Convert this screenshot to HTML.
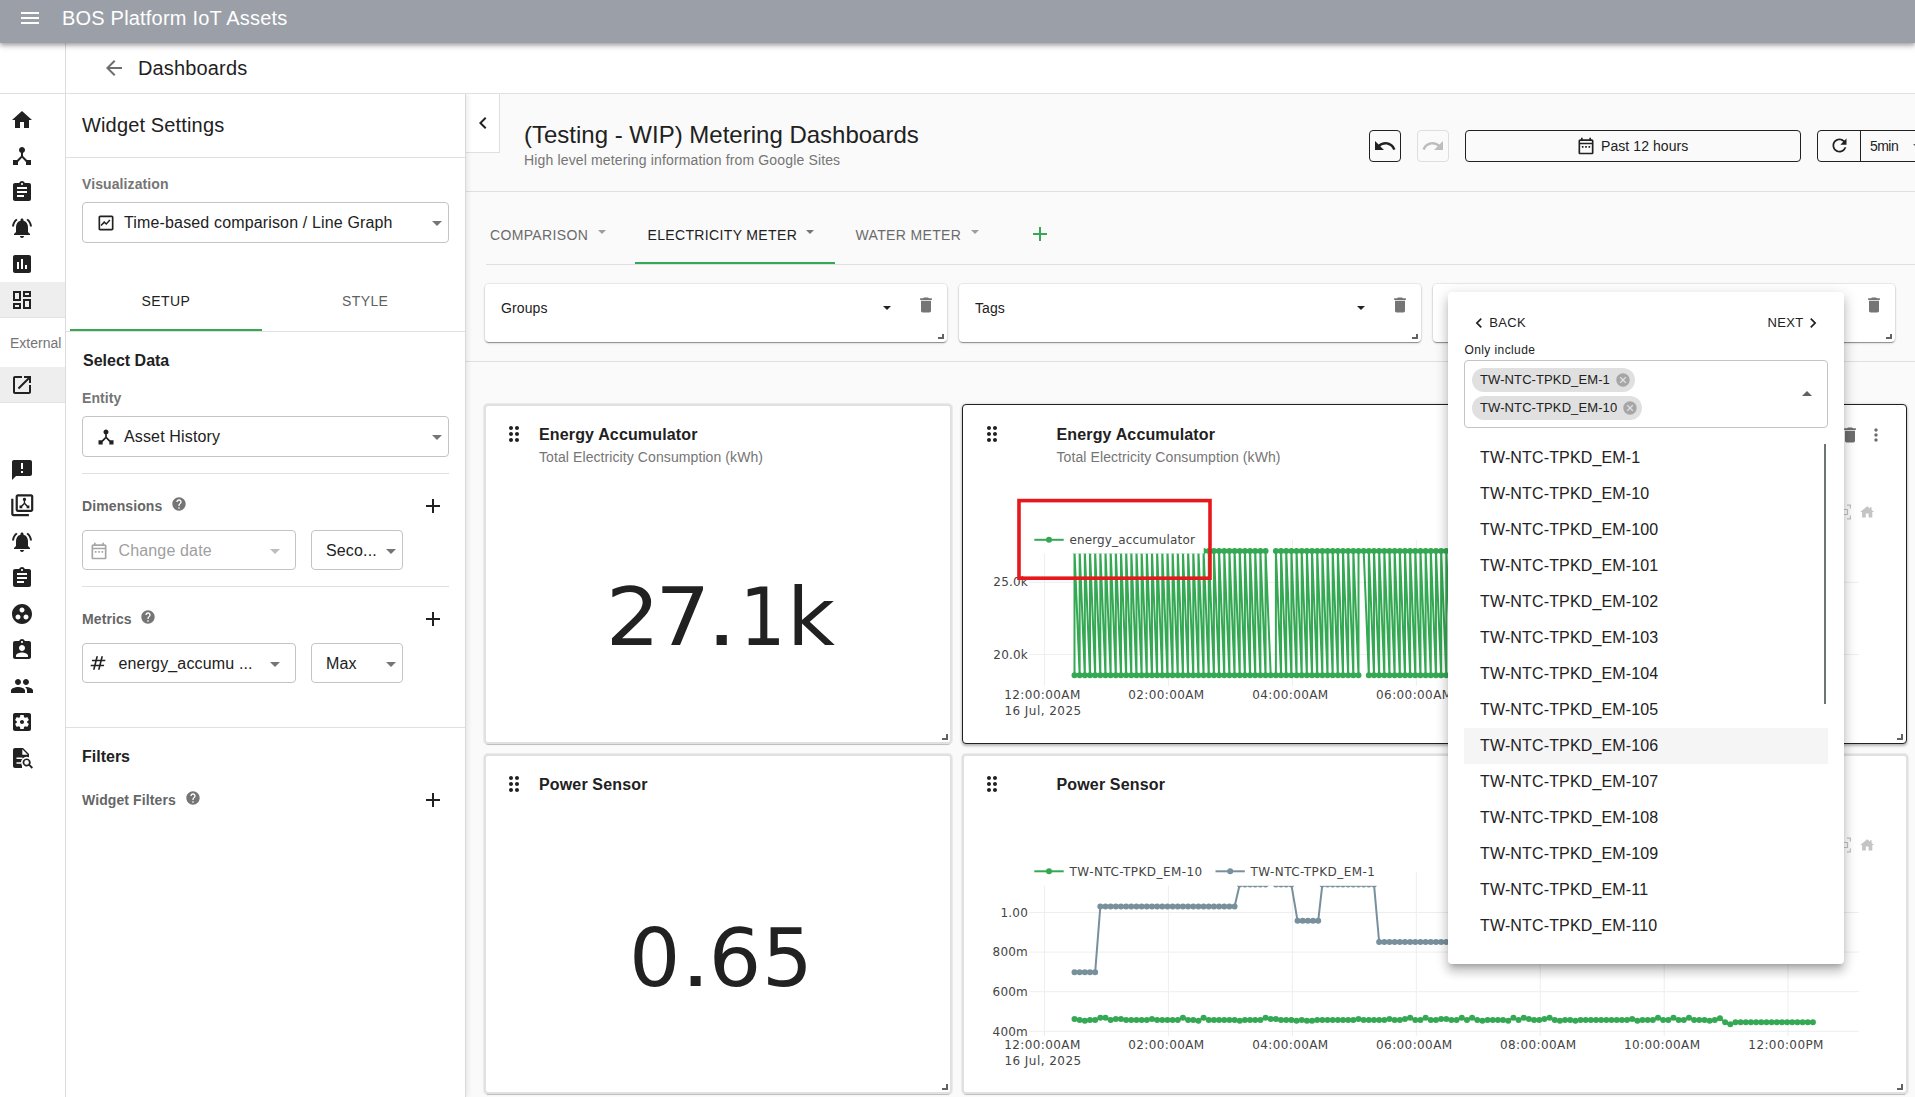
<!DOCTYPE html>
<html lang="en">
<head>
<meta charset="utf-8">
<title>BOS Platform IoT Assets</title>
<style>
*{box-sizing:border-box;margin:0;padding:0}
html,body{width:1915px;height:1097px;overflow:hidden;background:#fff;font-family:"Liberation Sans",sans-serif;color:#212121}
.abs{position:absolute}
svg{display:block}
.ico{position:absolute;width:24px;height:24px;fill:#212121}
/* top bar */
#topbar{left:0;top:0;width:1915px;height:43px;background:#9ba0a8;box-shadow:0 2px 4px rgba(0,0,0,.28),0 4px 6px rgba(0,0,0,.12);z-index:20}
#topbar .title{left:62px;top:6px;font-size:20px;letter-spacing:.2px;line-height:24px;color:#fff;white-space:nowrap}
/* subheader */
#subbar{left:66px;top:43px;width:1849px;height:51px;background:#fff;border-bottom:1px solid #e0e0e0;z-index:5}
#subbar .t{left:72px;top:13px;font-size:20px;letter-spacing:.15px;line-height:24px;color:#1f1f1f;white-space:nowrap}
/* sidebar */
#side{left:0;top:43px;width:66px;height:1054px;background:#fff;border-right:1px solid #dcdcdc;z-index:6}
#side .sel{left:0;width:65px;height:36px;background:#eeeeee}
#side .ext{left:10px;top:292px;font-size:14px;line-height:16px;color:#757575;white-space:nowrap}
/* settings panel */
#panel{left:66px;top:94px;width:400px;height:1003px;background:#fff;border-right:1px solid #d9d9d9;box-shadow:2px 0 5px rgba(0,0,0,.08);z-index:4}
.hl{position:absolute;height:1px;background:#e0e0e0}
.lbl{position:absolute;font-size:14px;letter-spacing:.1px;font-weight:bold;color:#757575;line-height:16px;white-space:nowrap}
.sec{position:absolute;font-size:16px;font-weight:bold;color:#212121;line-height:20px;white-space:nowrap}
.box{position:absolute;border:1px solid #c4c4c4;border-radius:4px;background:#fff;height:41px}
.box .tx{position:absolute;font-size:16px;line-height:20px;top:10px;color:#212121;white-space:nowrap}
.dd{position:absolute;width:0;height:0;border-left:5px solid transparent;border-right:5px solid transparent;border-top:5px solid #757575}
/* main */
#main{left:466px;top:94px;width:1449px;height:1003px;background:#fafafa;z-index:1}
.card{position:absolute;background:#fff;border-radius:4px;box-shadow:0 0 0 1px rgba(0,0,0,.05),0 2px 1px -1px rgba(0,0,0,.22),0 1px 1px 0 rgba(0,0,0,.16),0 1px 3px 0 rgba(0,0,0,.14)}
.ctitle{position:absolute;font-size:16px;font-weight:bold;line-height:24px;color:#212121;white-space:nowrap}
.csub{position:absolute;font-size:14px;line-height:16px;color:#757575;white-space:nowrap}
.big{position:absolute;font-family:"DejaVu Sans",sans-serif;color:#212121;white-space:nowrap;text-align:center}
.tab{position:absolute;font-size:14px;letter-spacing:.35px;line-height:16px;white-space:nowrap;color:#6b6b6b}
.btn{position:absolute;border:1px solid #212121;border-radius:4px;height:33px;background:#fafafa}
.rz{position:absolute;width:5.600px;height:5.600px;border-right:2px solid #626262;border-bottom:2px solid #626262}
/* popup */
#pop{left:1448px;top:292px;width:396px;height:672px;background:#fff;border-radius:4px;box-shadow:0 5px 5px -3px rgba(0,0,0,.2),0 8px 10px 1px rgba(0,0,0,.14),0 3px 14px 2px rgba(0,0,0,.12);z-index:30}
.opt{position:absolute;left:16px;width:364px;height:36px;font-size:16px;line-height:36px;padding-left:16px;color:#212121;white-space:nowrap}
.chip{position:absolute;height:24px;border-radius:12px;background:#e0e0e0;font-size:13px;letter-spacing:.1px;line-height:24px;padding-left:8px;color:#212121;white-space:nowrap}
</style>
</head>
<body>
<!-- TOPBAR -->
<div id="topbar" class="abs">
  <svg class="ico" style="left:18px;top:6px;fill:#fff" viewBox="0 0 24 24"><path d="M3 18h18v-2H3v2zm0-5h18v-2H3v2zm0-7v2h18V6H3z"/></svg>
  <div class="abs title">BOS Platform IoT Assets</div>
</div>
<!-- SUBBAR -->
<div id="subbar" class="abs">
  <svg class="ico" style="left:36px;top:13px;fill:#6e6e6e" viewBox="0 0 24 24"><path d="M20 11H7.83l5.59-5.59L12 4l-8 8 8 8 1.41-1.41L7.83 13H20v-2z"/></svg>
  <div class="abs t">Dashboards</div>
</div>
<!-- SIDEBAR -->
<div id="side" class="abs">
<!--SIDE-->
<div class="abs sel" style="top:239px;border-bottom:1px solid #e2e2e2"></div>
<div class="abs sel" style="top:324px;border-bottom:1px solid #e2e2e2"></div>
<div class="abs ext">External</div>
<div class="abs sideline" style="left:0;top:50px;width:65px;height:1px;background:#e0e0e0"></div>
<svg class="ico" style="left:10.00px;top:65.00px;width:24.0px;height:24.0px" viewBox="0 0 24 24"><path d="M10 20v-6h4v6h5v-8h3L12 3 2 12h3v8z"/></svg>
<svg class="ico" style="left:10.00px;top:101.00px;width:24.0px;height:24.0px" viewBox="0 0 24 24"><path d="M17 16l-4-4V8.82C14.16 8.4 15 7.3 15 6c0-1.66-1.34-3-3-3S9 4.34 9 6c0 1.3.84 2.4 2 2.82V12l-4 4H3v5h5v-3.05l4-4.2 4 4.2V21h5v-5h-4z"/></svg>
<svg class="ico" style="left:10.00px;top:137.00px;width:24.0px;height:24.0px" viewBox="0 0 24 24"><path d="M19 3h-4.18C14.4 1.84 13.3 1 12 1c-1.3 0-2.4.84-2.82 2H5c-1.1 0-2 .9-2 2v14c0 1.1.9 2 2 2h14c1.1 0 2-.9 2-2V5c0-1.1-.9-2-2-2zm-7 0c.55 0 1 .45 1 1s-.45 1-1 1-1-.45-1-1 .45-1 1-1zm2 14H7v-2h7v2zm3-4H7v-2h10v2zm0-4H7V7h10v2z"/></svg>
<svg class="ico" style="left:10.00px;top:173.00px;width:24.0px;height:24.0px" viewBox="0 0 24 24"><path d="M7.58 4.08L6.15 2.65C3.75 4.48 2.17 7.3 2.03 10.5h2c.15-2.65 1.51-4.97 3.55-6.42zm12.39 6.42h2c-.15-3.2-1.73-6.02-4.12-7.85l-1.42 1.43c2.02 1.45 3.39 3.77 3.54 6.42zM18 11c0-3.07-1.64-5.64-4.5-6.32V4c0-.83-.67-1.5-1.5-1.5s-1.5.67-1.5 1.5v.68C7.63 5.36 6 7.92 6 11v5l-2 2v1h16v-1l-2-2v-5zm-6 11c.14 0 .27-.01.4-.04.65-.14 1.18-.58 1.44-1.18.1-.24.15-.5.15-.78h-4c.01 1.1.9 2 2.01 2z"/></svg>
<svg class="ico" style="left:10.00px;top:209.00px;width:24.0px;height:24.0px" viewBox="0 0 24 24"><path d="M19 3H5c-1.1 0-2 .9-2 2v14c0 1.1.9 2 2 2h14c1.1 0 2-.9 2-2V5c0-1.1-.9-2-2-2zM9 17H7v-7h2v7zm4 0h-2V7h2v10zm4 0h-2v-4h2v4z"/></svg>
<svg class="ico" style="left:10.00px;top:245.00px;width:24.0px;height:24.0px" viewBox="0 0 24 24"><path d="M19 5v2h-4V5h4M9 5v6H5V5h4m10 8v6h-4v-6h4M9 17v2H5v-2h4M21 3h-8v6h8V3zM11 3H3v10h8V3zm10 8h-8v10h8V11zm-10 4H3v6h8v-6z"/></svg>
<svg class="ico" style="left:10.00px;top:330.00px;width:24.0px;height:24.0px" viewBox="0 0 24 24"><path d="M19 19H5V5h7V3H5c-1.11 0-2 .9-2 2v14c0 1.1.89 2 2 2h14c1.1 0 2-.9 2-2v-7h-2v7zM14 3v2h3.59l-9.83 9.83 1.41 1.41L19 6.41V10h2V3h-7z"/></svg>
<svg class="ico" style="left:10.00px;top:414.50px;width:24.0px;height:24.0px" viewBox="0 0 24 24"><path d="M20 2H4c-1.100 0-1.990.900-1.990 2L2 22l4-4h14c1.100 0 2-.900 2-2V4c0-1.100-.900-2-2-2zm-7 9h-2V5h2v6zm0 4h-2v-2h2v2z"/></svg>
<svg class="ico" style="left:8.75px;top:449.35px;width:26.5px;height:26.5px" viewBox="0 0 24 24"><path d="M20 4v12H8V4h12m0-2H8c-1.1 0-2 .9-2 2v12c0 1.1.9 2 2 2h12c1.1 0 2-.9 2-2V4c0-1.1-.9-2-2-2zM2 6v14c0 1.1.9 2 2 2h14v-2H4V6H2zM14 5.2a1.5 1.5 0 0 1 .6 2.87V10l2.3 2.3H18.5v2.5H16v-1.5L14 11.2l-2 2.1v1.5H9.500v-2.5H11.100L13.400 10V8.070A1.500 1.500 0 0 1 14 5.200z"/></svg>
<svg class="ico" style="left:10.00px;top:486.70px;width:24.0px;height:24.0px" viewBox="0 0 24 24"><path d="M7.58 4.08L6.15 2.65C3.75 4.48 2.17 7.3 2.03 10.5h2c.15-2.65 1.51-4.97 3.55-6.42zm12.39 6.42h2c-.15-3.2-1.73-6.02-4.12-7.85l-1.42 1.43c2.02 1.45 3.39 3.77 3.54 6.42zM18 11c0-3.07-1.64-5.64-4.5-6.32V4c0-.83-.67-1.5-1.5-1.5s-1.5.67-1.5 1.5v.68C7.63 5.36 6 7.92 6 11v5l-2 2v1h16v-1l-2-2v-5zm-6 11c.14 0 .27-.01.4-.04.65-.14 1.18-.58 1.44-1.18.1-.24.15-.5.15-.78h-4c.01 1.1.9 2 2.01 2z"/></svg>
<svg class="ico" style="left:10.00px;top:522.80px;width:24.0px;height:24.0px" viewBox="0 0 24 24"><path d="M19 3h-4.18C14.4 1.84 13.3 1 12 1c-1.3 0-2.4.84-2.82 2H5c-1.1 0-2 .9-2 2v14c0 1.1.9 2 2 2h14c1.1 0 2-.9 2-2V5c0-1.1-.9-2-2-2zm-7 0c.55 0 1 .45 1 1s-.45 1-1 1-1-.45-1-1 .45-1 1-1zm2 14H7v-2h7v2zm3-4H7v-2h10v2zm0-4H7V7h10v2z"/></svg>
<svg class="ico" style="left:10.00px;top:558.90px;width:24.0px;height:24.0px" viewBox="0 0 24 24"><path d="M12 2C6.48 2 2 6.48 2 12s4.48 10 10 10 10-4.48 10-10S17.52 2 12 2zM8 17.5c-1.380 0-2.500-1.120-2.500-2.500s1.120-2.500 2.500-2.500 2.500 1.120 2.500 2.500-1.120 2.500-2.500 2.500zM9.500 8c0-1.380 1.120-2.500 2.500-2.500s2.500 1.120 2.500 2.500-1.120 2.500-2.500 2.500S9.500 9.380 9.500 8zm6.500 9.500c-1.380 0-2.500-1.120-2.500-2.500s1.120-2.500 2.500-2.500 2.500 1.120 2.500 2.500-1.120 2.500-2.500 2.500z"/></svg>
<svg class="ico" style="left:10.00px;top:595.00px;width:24.0px;height:24.0px" viewBox="0 0 24 24"><path d="M19 3h-4.18C14.4 1.84 13.3 1 12 1c-1.3 0-2.4.84-2.82 2H5c-1.1 0-2 .9-2 2v14c0 1.1.9 2 2 2h14c1.1 0 2-.9 2-2V5c0-1.1-.9-2-2-2zm-7 0c.55 0 1 .45 1 1s-.45 1-1 1-1-.45-1-1 .45-1 1-1zm0 4c1.660 0 3 1.340 3 3s-1.340 3-3 3-3-1.340-3-3 1.340-3 3-3zm6 12H6v-1.400c0-2 4-3.100 6-3.100s6 1.100 6 3.100V19z"/></svg>
<svg class="ico" style="left:10.00px;top:631.10px;width:24.0px;height:24.0px" viewBox="0 0 24 24"><path d="M16 11c1.660 0 2.990-1.340 2.990-3S17.660 5 16 5c-1.660 0-3 1.340-3 3s1.340 3 3 3zm-8 0c1.660 0 2.990-1.340 2.990-3S9.660 5 8 5C6.340 5 5 6.340 5 8s1.340 3 3 3zm0 2c-2.330 0-7 1.170-7 3.500V19h14v-2.500c0-2.330-4.670-3.500-7-3.500zm8 0c-.290 0-.620.020-.970.050 1.160.840 1.970 1.970 1.970 3.450V19h6v-2.500c0-2.330-4.670-3.500-7-3.500z"/></svg>
<svg class="ico" style="left:10.00px;top:667.20px;width:24.0px;height:24.0px" viewBox="0 0 24 24"><path d="M12 10c-1.100 0-2 .900-2 2s.900 2 2 2 2-.900 2-2-.900-2-2-2zm7-7H5c-1.110 0-2 .900-2 2v14c0 1.100.890 2 2 2h14c1.110 0 2-.900 2-2V5c0-1.100-.890-2-2-2zm-1.750 9c0 .230-.020.460-.050.680l1.480 1.160c.130.110.170.300.080.450l-1.400 2.420c-.090.150-.270.210-.430.150l-1.740-.700c-.360.280-.760.510-1.180.690l-.260 1.850c-.030.170-.180.300-.350.300h-2.800c-.170 0-.320-.130-.350-.290l-.260-1.850c-.430-.180-.820-.410-1.180-.690l-1.740.700c-.160.060-.340 0-.430-.150l-1.400-2.420c-.090-.150-.050-.340.080-.450l1.480-1.160c-.030-.230-.050-.460-.050-.690 0-.230.020-.460.050-.680l-1.480-1.160c-.130-.110-.170-.300-.080-.450l1.400-2.420c.090-.150.270-.210.430-.150l1.740.700c.360-.280.760-.510 1.180-.690l.260-1.850c.030-.170.180-.300.350-.300h2.800c.170 0 .320.130.350.290l.260 1.850c.430.180.820.410 1.180.690l1.740-.700c.160-.060.340 0 .430.150l1.400 2.420c.090.150.050.340-.080.450l-1.480 1.160c.030.230.050.460.050.690z"/></svg>
<svg class="ico" style="left:10.00px;top:703.30px;width:24.0px;height:24.0px" viewBox="0 0 24 24"><path d="M5 2C3.900 2 3 2.900 3 4v16c0 1.100.900 2 2 2h12c1.100 0 2-.900 2-2V8l-6-6z"/><path d="M12.300 3.300v5.400h5.400z" fill="#fff"/><path d="M6.500 11.400h6v1.500h-6zM6.500 16.300h4.500v1.500h-4.500z" fill="#fff"/><circle cx="16.600" cy="16.400" r="5.600" fill="#fff"/><path d="M18.500 18.300L24 23.800V24H12V18.500z" fill="#fff"/><path d="M16.600 12.400a4 4 0 1 0 2.200 7.340l2.900 2.900 1.300-1.300-2.900-2.900A4 4 0 0 0 16.600 12.400zm0 1.700a2.300 2.300 0 1 1 0 4.600 2.300 2.300 0 0 1 0-4.600z"/></svg>
</div>
<!-- PANEL -->
<div id="panel" class="abs">
<!--PANEL-->
</div>
<div class="abs" style="left:0;top:0;z-index:4">
<div class="abs" style="left:82px;top:113px;font-size:20px;line-height:24px;letter-spacing:.15px;white-space:nowrap">Widget Settings</div>
<div class="hl" style="left:66px;top:157px;width:399px"></div>
<div class="lbl" style="left:82px;top:176px">Visualization</div>
<div class="box" style="left:82px;top:202px;width:367px"><svg class="ico" style="left:13px;top:10px;width:20px;height:20px" viewBox="0 0 24 24"><path d="M19 3H5c-1.100 0-2 .900-2 2v14c0 1.100.900 2 2 2h14c1.100 0 2-.900 2-2V5c0-1.100-.900-2-2-2zm0 16H5V5h14v14z"/><path d="M6.700 15.600l3.300-3.400 2.400 2.200 4.900-5.500-1.300-1.200-3.700 4.200-2.400-2.200-4.500 4.600z"/></svg><div class="tx" style="left:41px;letter-spacing:.15px">Time-based comparison / Line Graph</div><div class="dd" style="left:349px;top:18px"></div></div>
<div class="tab" style="left:141.500px;top:293px;color:#212121;letter-spacing:.4px">SETUP</div>
<div class="tab" style="left:342px;top:293px;color:#616161;letter-spacing:.4px">STYLE</div>
<div class="hl" style="left:66px;top:331px;width:399px"></div>
<div class="abs" style="left:70px;top:329px;width:192px;height:2px;background:#34a853"></div>
<div class="sec" style="left:83px;top:351px">Select Data</div>
<div class="lbl" style="left:82px;top:390px">Entity</div>
<div class="box" style="left:82px;top:416px;width:367px"><svg class="ico" style="left:13px;top:10px;width:20px;height:20px" viewBox="0 0 24 24"><path d="M17 16l-4-4V8.820C14.160 8.400 15 7.300 15 6c0-1.660-1.340-3-3-3S9 4.340 9 6c0 1.300.840 2.400 2 2.820V12l-4 4H3v5h5v-3.050l4-4.200 4 4.200V21h5v-5h-4z"/></svg><div class="tx" style="left:41px;letter-spacing:.15px">Asset History</div><div class="dd" style="left:349px;top:18px"></div></div>
<div class="hl" style="left:82px;top:473px;width:367px"></div>
<div class="lbl" style="left:82px;top:498px;color:#666">Dimensions</div><svg class="ico" style="left:171.0px;top:496.0px;width:16px;height:16px;fill:#757575" viewBox="0 0 24 24"><path d="M12 2C6.480 2 2 6.480 2 12s4.480 10 10 10 10-4.480 10-10S17.520 2 12 2zm1 17h-2v-2h2v2zm2.070-7.750l-.900.920C13.450 12.900 13 13.500 13 15h-2v-.500c0-1.100.450-2.100 1.170-2.830l1.240-1.260c.370-.360.590-.860.590-1.410 0-1.100-.900-2-2-2s-2 .900-2 2H8c0-2.210 1.790-4 4-4s4 1.790 4 4c0 .880-.360 1.680-.930 2.250z"/></svg><svg class="ico" style="left:421.0px;top:494.0px" viewBox="0 0 24 24"><path d="M19 13h-6v6h-2v-6H5v-2h6V5h2v6h6v2z"/></svg>
<div class="box" style="left:82px;top:530px;width:214px;height:40px"><svg class="ico" style="left:5.500px;top:9.500px;width:20px;height:20px;fill:#a6a6a6" viewBox="0 0 24 24"><path d="M19 4h-1V2h-2v2H8V2H6v2H5c-1.110 0-1.990.900-1.990 2L3 20c0 1.100.890 2 2 2h14c1.100 0 2-.900 2-2V6c0-1.100-.900-2-2-2zm0 16H5V10h14v10zm0-12H5V6h14v2zM9 14H7v-2h2v2zm4 0h-2v-2h2v2zm4 0h-2v-2h2v2z"/></svg><div class="tx" style="left:35.500px;top:9.500px;color:#a0a0a0;letter-spacing:.15px">Change date</div><div class="dd" style="left:187px;top:17.500px;border-top-color:#bdbdbd"></div></div>
<div class="box" style="left:311px;top:530px;width:92px;height:40px"><div class="tx" style="left:14px;top:9.500px;letter-spacing:.15px">Seco...</div><div class="dd" style="left:74px;top:17.500px"></div></div>
<div class="hl" style="left:82px;top:586px;width:367px"></div>
<div class="lbl" style="left:82px;top:611px;color:#666">Metrics</div><svg class="ico" style="left:140.0px;top:609.0px;width:16px;height:16px;fill:#757575" viewBox="0 0 24 24"><path d="M12 2C6.480 2 2 6.480 2 12s4.480 10 10 10 10-4.480 10-10S17.520 2 12 2zm1 17h-2v-2h2v2zm2.070-7.750l-.900.920C13.450 12.900 13 13.500 13 15h-2v-.500c0-1.100.450-2.100 1.170-2.830l1.240-1.260c.370-.360.590-.860.590-1.410 0-1.100-.900-2-2-2s-2 .900-2 2H8c0-2.210 1.790-4 4-4s4 1.790 4 4c0 .880-.360 1.680-.930 2.250z"/></svg><svg class="ico" style="left:421.0px;top:607.0px" viewBox="0 0 24 24"><path d="M19 13h-6v6h-2v-6H5v-2h6V5h2v6h6v2z"/></svg>
<div class="box" style="left:82px;top:643px;width:214px;height:40px"><svg class="ico" style="left:5px;top:9px;width:20px;height:20px" viewBox="0 0 24 24"><path d="M20.500 10l.500-2h-4l1-4h-2l-1 4h-4l1-4h-2l-1 4H5l-.500 2h4l-1 4h-4L3 16h4l-1 4h2l1-4h4l-1 4h2l1-4h4l.500-2h-4l1-4h4zm-7 4h-4l1-4h4l-1 4z"/></svg><div class="tx" style="left:35.500px;top:9.500px;letter-spacing:.15px">energy_accumu ...</div><div class="dd" style="left:187px;top:17.500px"></div></div>
<div class="box" style="left:311px;top:643px;width:92px;height:40px"><div class="tx" style="left:14px;top:9.500px;letter-spacing:.15px">Max</div><div class="dd" style="left:74px;top:17.500px"></div></div>
<div class="hl" style="left:66px;top:727px;width:399px"></div>
<div class="sec" style="left:82px;top:747px">Filters</div>
<div class="lbl" style="left:82px;top:792px;color:#666">Widget Filters</div><svg class="ico" style="left:185.0px;top:790.3px;width:16px;height:16px;fill:#757575" viewBox="0 0 24 24"><path d="M12 2C6.480 2 2 6.480 2 12s4.480 10 10 10 10-4.480 10-10S17.520 2 12 2zm1 17h-2v-2h2v2zm2.070-7.750l-.900.920C13.450 12.900 13 13.500 13 15h-2v-.500c0-1.100.450-2.100 1.170-2.830l1.240-1.260c.370-.360.590-.860.590-1.410 0-1.100-.900-2-2-2s-2 .900-2 2H8c0-2.210 1.790-4 4-4s4 1.790 4 4c0 .880-.360 1.680-.930 2.250z"/></svg><svg class="ico" style="left:421.0px;top:788.0px" viewBox="0 0 24 24"><path d="M19 13h-6v6h-2v-6H5v-2h6V5h2v6h6v2z"/></svg>
</div>
<!-- MAIN -->
<div id="main" class="abs">
<!--MAIN-->
</div>
<div class="abs" style="left:0;top:0;z-index:2">
<div class="abs" style="left:466px;top:94px;width:34px;height:59px;background:#fff;border-right:1px solid #e0e0e0;border-bottom:1px solid #e0e0e0"></div>
<svg class="ico" style="left:471.0px;top:111.0px;width:24px;height:24px;fill:#212121" viewBox="0 0 24 24"><path d="M15.410 7.410L14 6l-6 6 6 6 1.410-1.410L10.830 12z"/></svg>
<div class="abs" style="left:524px;top:119px;font-size:24px;line-height:32px;white-space:nowrap;color:#212121">(Testing - WIP) Metering Dashboards</div>
<div class="abs" style="left:524px;top:149.500px;font-size:14px;line-height:20px;letter-spacing:.15px;white-space:nowrap;color:#757575">High level metering information from Google Sites</div>
<div class="hl" style="left:466px;top:191px;width:1449px"></div>
<div class="btn" style="left:1369px;top:130px;width:32px;height:32px"></div>
<svg class="ico" style="left:1373.0px;top:134.3px;width:24px;height:24px;fill:#212121" viewBox="0 0 24 24"><path d="M12.500 8c-2.650 0-5.050.990-6.900 2.600L2 7v9h9l-3.620-3.620c1.390-1.160 3.160-1.880 5.120-1.880 3.540 0 6.550 2.310 7.600 5.500l2.370-.780C21.080 11.030 17.150 8 12.500 8z"/></svg>
<div class="btn" style="left:1417px;top:130px;width:32px;height:32px;border-color:#dedede"></div>
<svg class="ico" style="left:1421.0px;top:134.3px;width:24px;height:24px;fill:#bdbdbd" viewBox="0 0 24 24"><path d="M18.400 10.600C16.550 8.990 14.150 8 11.500 8c-4.650 0-8.580 3.030-9.960 7.220L3.900 16c1.050-3.190 4.050-5.500 7.600-5.500 1.950 0 3.730.720 5.120 1.880L13 16h9V7l-3.600 3.600z"/></svg>
<div class="btn" style="left:1465px;top:130px;width:336px;height:32px"></div>
<svg class="ico" style="left:1575.7px;top:136.2px;width:20px;height:20px;fill:#212121" viewBox="0 0 24 24"><path d="M19 4h-1V2h-2v2H8V2H6v2H5c-1.110 0-1.990.900-1.990 2L3 20c0 1.100.890 2 2 2h14c1.100 0 2-.900 2-2V6c0-1.100-.900-2-2-2zm0 16H5V10h14v10zm0-12H5V6h14v2zM9 14H7v-2h2v2zm4 0h-2v-2h2v2zm4 0h-2v-2h2v2z"/></svg>
<div class="abs" style="left:1601px;top:138px;font-size:14px;line-height:16px;white-space:nowrap;letter-spacing:.08px;color:#212121">Past 12 hours</div>
<div class="btn" style="left:1817px;top:130px;width:110px;height:32px"></div>
<div class="abs" style="left:1860px;top:130px;width:1px;height:32px;background:#212121"></div>
<svg class="ico" style="left:1828.8px;top:135.0px;width:21px;height:21px;fill:#212121" viewBox="0 0 24 24"><path d="M17.650 6.350C16.200 4.900 14.210 4 12 4c-4.420 0-7.990 3.580-7.990 8s3.570 8 7.990 8c3.730 0 6.840-2.550 7.730-6h-2.080c-.820 2.330-3.040 4-5.650 4-3.310 0-6-2.690-6-6s2.690-6 6-6c1.660 0 3.140.690 4.220 1.780L13 11h7V4l-2.350 2.350z"/></svg>
<div class="abs" style="left:1870px;top:137.500px;font-size:14px;line-height:16px;letter-spacing:-.55px;white-space:nowrap;color:#212121">5min</div>
<div class="abs" style="left:1912.7px;top:144.0px;width:0;height:0;border-left:5.0px solid transparent;border-right:5.0px solid transparent;border-top:5.0px solid #616161"></div>
<div class="tab" style="left:490px;top:227px;letter-spacing:.35px">COMPARISON</div><div class="abs" style="left:598.0px;top:230.3px;width:0;height:0;border-left:4.2px solid transparent;border-right:4.2px solid transparent;border-top:4.2px solid #9e9e9e"></div>
<div class="tab" style="left:647.500px;top:227px;color:#212121;letter-spacing:.35px">ELECTRICITY METER</div><div class="abs" style="left:805.5px;top:230.3px;width:0;height:0;border-left:4.2px solid transparent;border-right:4.2px solid transparent;border-top:4.2px solid #757575"></div>
<div class="tab" style="left:855.500px;top:227px;letter-spacing:.35px">WATER METER</div><div class="abs" style="left:970.5px;top:230.3px;width:0;height:0;border-left:4.2px solid transparent;border-right:4.2px solid transparent;border-top:4.2px solid #9e9e9e"></div>
<svg class="ico" style="left:1028.0px;top:222.2px;width:24px;height:24px;fill:#34a853" viewBox="0 0 24 24"><path d="M19 13h-6v6h-2v-6H5v-2h6V5h2v6h6v2z"/></svg>
<div class="hl" style="left:486px;top:264px;width:1429px"></div>
<div class="abs" style="left:635px;top:262px;width:200px;height:2px;background:#34a853"></div>
<div class="card" style="left:485px;top:284px;width:462px;height:58px"></div><div class="abs" style="left:501px;top:300px;font-size:14px;line-height:16px;white-space:nowrap;color:#212121;letter-spacing:.1px">Groups</div><div class="abs" style="left:883.0px;top:306.0px;width:0;height:0;border-left:4.2px solid transparent;border-right:4.2px solid transparent;border-top:4.5px solid #212121"></div><svg class="ico" style="left:916.0px;top:295.0px;width:20px;height:20px;fill:#757575" viewBox="0 0 24 24"><path d="M6 19c0 1.100.900 2 2 2h8c1.100 0 2-.900 2-2V7H6v12zM19 4h-3.500l-1-1h-5l-1 1H5v2h14V4z"/></svg><div class="rz" style="left:938.4px;top:333.500px"></div>
<div class="card" style="left:959px;top:284px;width:462px;height:58px"></div><div class="abs" style="left:975px;top:300px;font-size:14px;line-height:16px;white-space:nowrap;color:#212121;letter-spacing:.1px">Tags</div><div class="abs" style="left:1357.0px;top:306.0px;width:0;height:0;border-left:4.2px solid transparent;border-right:4.2px solid transparent;border-top:4.5px solid #212121"></div><svg class="ico" style="left:1390.0px;top:295.0px;width:20px;height:20px;fill:#757575" viewBox="0 0 24 24"><path d="M6 19c0 1.100.900 2 2 2h8c1.100 0 2-.900 2-2V7H6v12zM19 4h-3.500l-1-1h-5l-1 1H5v2h14V4z"/></svg><div class="rz" style="left:1412.4px;top:333.500px"></div>
<div class="card" style="left:1433px;top:284px;width:462px;height:58px"></div><svg class="ico" style="left:1864.0px;top:295.0px;width:20px;height:20px;fill:#757575" viewBox="0 0 24 24"><path d="M6 19c0 1.100.900 2 2 2h8c1.100 0 2-.900 2-2V7H6v12zM19 4h-3.500l-1-1h-5l-1 1H5v2h14V4z"/></svg><div class="rz" style="left:1886.4px;top:333.500px"></div>
<div class="hl" style="left:466px;top:361px;width:1449px"></div>
<div class="card" style="left:486px;top:406px;width:464px;height:336px;border-radius:2px;box-shadow:0 0 0 2px #e1e1e1,0 3px 1px 0 rgba(0,0,0,.20),0 0 0 3px #ebebeb"></div>
<div class="card" style="left:486px;top:756px;width:464px;height:336px;border-radius:2px;box-shadow:0 0 0 2px #e1e1e1,0 3px 1px 0 rgba(0,0,0,.20),0 0 0 3px #ebebeb"></div>
<div class="card" style="left:962px;top:404px;width:945px;height:340px;border:1.200px solid #212121;box-shadow:0 0 2px 1px rgba(0,0,0,.08),0 2px 3px 0 rgba(0,0,0,.24)"></div>
<div class="card" style="left:964px;top:756px;width:942px;height:336px;border-radius:2px;box-shadow:0 0 0 2px #e1e1e1,0 3px 1px 0 rgba(0,0,0,.20),0 0 0 3px #ebebeb"></div>
<div class="rz" style="left:942.4px;top:734.2px"></div>
<div class="rz" style="left:942.4px;top:1084.2px"></div>
<div class="rz" style="left:1897.4px;top:734.2px"></div>
<div class="rz" style="left:1897.4px;top:1084.2px"></div>
<svg class="ico" style="left:501.8px;top:422.0px;width:24px;height:24px;fill:#212121" viewBox="0 0 24 24"><path d="M11 18c0 1.100-.900 2-2 2s-2-.900-2-2 .900-2 2-2 2 .900 2 2zm-2-8c-1.100 0-2 .900-2 2s.900 2 2 2 2-.900 2-2-.900-2-2-2zm0-6c-1.100 0-2 .900-2 2s.900 2 2 2 2-.900 2-2-.900-2-2-2zm6 4c1.100 0 2-.900 2-2s-.900-2-2-2-2 .900-2 2 .900 2 2 2zm0 2c-1.100 0-2 .900-2 2s.900 2 2 2 2-.900 2-2-.900-2-2-2zm0 6c-1.100 0-2 .900-2 2s.900 2 2 2 2-.900 2-2-.900-2-2-2z"/></svg>
<div class="ctitle" style="left:539px;top:422.500px;letter-spacing:.15px">Energy Accumulator</div>
<div class="csub" style="left:539px;top:446.500px;line-height:20px;letter-spacing:.09px">Total Electricity Consumption (kWh)</div>
<svg class="ico" style="left:501.8px;top:772.0px;width:24px;height:24px;fill:#212121" viewBox="0 0 24 24"><path d="M11 18c0 1.100-.900 2-2 2s-2-.900-2-2 .900-2 2-2 2 .900 2 2zm-2-8c-1.100 0-2 .900-2 2s.900 2 2 2 2-.900 2-2-.900-2-2-2zm0-6c-1.100 0-2 .900-2 2s.900 2 2 2 2-.900 2-2-.900-2-2-2zm6 4c1.100 0 2-.900 2-2s-.900-2-2-2-2 .900-2 2 .900 2 2 2zm0 2c-1.100 0-2 .900-2 2s.900 2 2 2 2-.900 2-2-.900-2-2-2zm0 6c-1.100 0-2 .900-2 2s.900 2 2 2 2-.900 2-2-.900-2-2-2z"/></svg>
<div class="ctitle" style="left:539px;top:772.500px;letter-spacing:.15px">Power Sensor</div>
<svg class="ico" style="left:980.0px;top:422.0px;width:24px;height:24px;fill:#212121" viewBox="0 0 24 24"><path d="M11 18c0 1.100-.900 2-2 2s-2-.900-2-2 .900-2 2-2 2 .900 2 2zm-2-8c-1.100 0-2 .900-2 2s.900 2 2 2 2-.900 2-2-.900-2-2-2zm0-6c-1.100 0-2 .900-2 2s.900 2 2 2 2-.900 2-2-.900-2-2-2zm6 4c1.100 0 2-.900 2-2s-.900-2-2-2-2 .900-2 2 .900 2 2 2zm0 2c-1.100 0-2 .900-2 2s.900 2 2 2 2-.900 2-2-.900-2-2-2zm0 6c-1.100 0-2 .900-2 2s.900 2 2 2 2-.900 2-2-.900-2-2-2z"/></svg>
<div class="ctitle" style="left:1056.500px;top:422.500px;letter-spacing:.15px">Energy Accumulator</div>
<div class="csub" style="left:1056.500px;top:446.500px;line-height:20px;letter-spacing:.09px">Total Electricity Consumption (kWh)</div>
<svg class="ico" style="left:980.0px;top:772.0px;width:24px;height:24px;fill:#212121" viewBox="0 0 24 24"><path d="M11 18c0 1.100-.900 2-2 2s-2-.900-2-2 .900-2 2-2 2 .900 2 2zm-2-8c-1.100 0-2 .900-2 2s.900 2 2 2 2-.900 2-2-.900-2-2-2zm0-6c-1.100 0-2 .900-2 2s.900 2 2 2 2-.900 2-2-.900-2-2-2zm6 4c1.100 0 2-.900 2-2s-.900-2-2-2-2 .900-2 2 .900 2 2 2zm0 2c-1.100 0-2 .900-2 2s.900 2 2 2 2-.900 2-2-.900-2-2-2zm0 6c-1.100 0-2 .900-2 2s.900 2 2 2 2-.900 2-2-.900-2-2-2z"/></svg>
<div class="ctitle" style="left:1056.500px;top:772.500px;letter-spacing:.15px">Power Sensor</div>
<svg class="ico" style="left:1840.0px;top:425.0px;width:20px;height:20px;fill:#6e6e6e" viewBox="0 0 24 24"><path d="M6 19c0 1.100.900 2 2 2h8c1.100 0 2-.900 2-2V7H6v12zM19 4h-3.500l-1-1h-5l-1 1H5v2h14V4z"/></svg><svg class="ico" style="left:1866.0px;top:425.0px;width:20px;height:20px;fill:#6e6e6e" viewBox="0 0 24 24"><path d="M12 8c1.100 0 2-.900 2-2s-.900-2-2-2-2 .900-2 2 .900 2 2 2zm0 2c-1.100 0-2 .900-2 2s.900 2 2 2 2-.900 2-2-.900-2-2-2zm0 6c-1.100 0-2 .900-2 2s.900 2 2 2 2-.900 2-2-.900-2-2-2z"/></svg>
<svg class="abs" style="left:0;top:0;width:1915px;height:1097px;overflow:hidden" viewBox="0 0 1915 1097" font-family="'DejaVu Sans',sans-serif" font-size="80" fill="#212121"><text transform="translate(605.63 644.9) scale(1.065 1)">2</text><text transform="translate(655.23 644.9) scale(1.084 1)">7</text><text transform="translate(705.99 644.9) scale(1.238 1)">.</text><text transform="translate(739.85 644.9) scale(0.900 1)">1</text><text transform="translate(787.12 644.9) scale(1.037 1)">k</text></svg>
<svg class="abs" style="left:0;top:0;width:1915px;height:1097px;overflow:hidden" viewBox="0 0 1915 1097" font-family="'DejaVu Sans',sans-serif" font-size="80" fill="#212121"><text transform="translate(628.95 986.0) scale(1.010 1)">0</text><text transform="translate(680.16 986.0) scale(1.212 1)">.</text><text transform="translate(708.47 986.0) scale(1.040 1)">6</text><text transform="translate(762.12 986.0) scale(0.997 1)">5</text></svg>
<!--CHARTS-->
<svg class="abs" style="left:0;top:0;width:1915px;height:1097px;overflow:hidden" viewBox="0 0 1915 1097" font-family="'DejaVu Sans',sans-serif" font-size="12" fill="#444">
<path d="M1044.5 540V686M1168.4 540V686M1292.4 540V686M1416.3 540V686M1540.2 540V686M1664.2 540V686M1788.1 540V686M1029 582.3H1859M1029 654.5H1859" stroke="#eee" stroke-width="1" fill="none"/>
<path d="M1074.50 675.2 L1074.50 551.0 L1079.66 675.2 L1079.66 551.0 L1084.83 675.2 L1084.83 551.0 L1089.99 675.2 L1089.99 551.0 L1095.15 675.2 L1095.15 551.0 L1100.32 675.2 L1100.32 551.0 L1105.48 675.2 L1105.48 551.0 L1110.65 675.2 L1110.65 551.0 L1115.81 675.2 L1115.81 551.0 L1120.97 675.2 L1120.97 551.0 L1126.14 675.2 L1126.14 551.0 L1131.30 675.2 L1131.30 551.0 L1136.46 675.2 L1136.46 551.0 L1141.63 675.2 L1141.63 551.0 L1146.79 675.2 L1146.79 551.0 L1151.96 675.2 L1151.96 551.0 L1157.12 675.2 L1157.12 551.0 L1162.28 675.2 L1162.28 551.0 L1167.45 675.2 L1167.45 551.0 L1172.61 675.2 L1172.61 551.0 L1177.78 675.2 L1177.78 551.0 L1182.94 675.2 L1182.94 551.0 L1188.10 675.2 L1188.10 551.0 L1193.27 675.2 L1193.27 551.0 L1198.43 675.2 L1198.43 551.0 L1203.59 675.2 L1203.59 551.0 L1208.76 675.2 L1208.76 551.0 L1213.92 675.2 L1213.92 551.0 L1219.09 675.2 L1219.09 551.0 L1224.25 675.2 L1224.25 551.0 L1229.41 675.2 L1229.41 551.0 L1234.58 675.2 L1234.58 551.0 L1239.74 675.2 L1239.74 551.0 L1244.90 675.2 L1244.90 551.0 L1250.07 675.2 L1250.07 551.0 L1255.23 675.2 L1255.23 551.0 L1260.39 675.2 L1260.39 551.0 L1265.56 675.2 L1265.56 551.0 L1270.72 675.2 L1275.89 675.2 L1275.89 551.0 L1281.05 675.2 L1281.05 551.0 L1286.21 675.2 L1286.21 551.0 L1291.38 675.2 L1291.38 551.0 L1296.54 675.2 L1296.54 551.0 L1301.70 675.2 L1301.70 551.0 L1306.87 675.2 L1306.87 551.0 L1312.03 675.2 L1312.03 551.0 L1317.20 675.2 L1317.20 551.0 L1322.36 675.2 L1322.36 551.0 L1327.52 675.2 L1327.52 551.0 L1332.69 675.2 L1332.69 551.0 L1337.85 675.2 L1337.85 551.0 L1343.01 675.2 L1343.01 551.0 L1348.18 675.2 L1348.18 551.0 L1353.34 675.2 L1353.34 551.0 L1358.51 675.2 L1358.51 551.0 L1363.67 551.0 L1368.83 675.2 L1368.83 551.0 L1374.00 675.2 L1374.00 551.0 L1379.16 675.2 L1379.16 551.0 L1384.33 675.2 L1384.33 551.0 L1389.49 675.2 L1389.49 551.0 L1394.65 675.2 L1394.65 551.0 L1399.82 675.2 L1399.82 551.0 L1404.98 675.2 L1404.98 551.0 L1410.14 675.2 L1410.14 551.0 L1415.31 675.2 L1415.31 551.0 L1420.47 675.2 L1420.47 551.0 L1425.63 675.2 L1425.63 551.0 L1430.80 675.2 L1430.80 551.0 L1435.96 675.2 L1435.96 551.0 L1441.13 675.2 L1441.13 551.0 L1446.29 675.2 L1446.29 551.0 L1451.45 675.2 L1451.45 551.0 L1456.62 675.2 L1456.62 551.0 L1461.78 675.2 L1461.78 551.0 L1466.95 675.2 L1466.95 551.0 L1472.11 675.2 L1472.11 551.0 L1477.27 675.2 L1477.27 551.0 L1482.44 675.2 L1482.44 551.0 L1487.60 675.2 L1487.60 551.0 L1492.76 675.2 L1492.76 551.0 L1497.93 675.2 L1497.93 551.0 L1503.09 675.2 L1503.09 551.0 L1508.26 675.2 L1508.26 551.0 L1513.42 675.2 L1513.42 551.0 L1518.58 675.2 L1518.58 551.0 L1523.75 675.2 L1523.75 551.0 L1528.91 675.2 L1528.91 551.0 L1534.07 675.2 L1534.07 551.0 L1539.24 675.2 L1539.24 551.0 L1544.40 675.2 L1544.40 551.0 L1549.57 675.2 L1549.57 551.0 L1554.73 675.2 L1554.73 551.0 L1559.89 675.2 L1559.89 551.0 L1565.06 675.2 L1565.06 551.0 L1570.22 675.2 L1570.22 551.0 L1575.38 675.2 L1575.38 551.0 L1580.55 675.2 L1580.55 551.0 L1585.71 675.2 L1585.71 551.0 L1590.88 675.2 L1590.88 551.0 L1596.04 675.2 L1596.04 551.0 L1601.20 675.2 L1601.20 551.0 L1606.37 675.2 L1606.37 551.0 L1611.53 675.2 L1611.53 551.0 L1616.69 675.2 L1616.69 551.0 L1621.86 675.2 L1621.86 551.0 L1627.02 675.2 L1627.02 551.0 L1632.18 675.2 L1632.18 551.0 L1637.35 675.2 L1637.35 551.0 L1642.51 675.2 L1642.51 551.0 L1647.68 675.2 L1647.68 551.0 L1652.84 675.2 L1652.84 551.0 L1658.00 675.2 L1658.00 551.0 L1663.17 675.2 L1663.17 551.0 L1668.33 675.2 L1668.33 551.0 L1673.49 675.2 L1673.49 551.0 L1678.66 675.2 L1678.66 551.0 L1683.82 675.2 L1683.82 551.0 L1688.99 675.2 L1688.99 551.0 L1694.15 675.2 L1694.15 551.0 L1699.31 675.2 L1699.31 551.0 L1704.48 675.2 L1704.48 551.0 L1709.64 675.2 L1709.64 551.0 L1714.81 675.2 L1714.81 551.0 L1719.97 675.2 L1719.97 551.0 L1725.13 675.2 L1725.13 551.0 L1730.30 675.2 L1730.30 551.0 L1735.46 675.2 L1735.46 551.0 L1740.62 675.2 L1740.62 551.0 L1745.79 675.2 L1745.79 551.0 L1750.95 675.2 L1750.95 551.0 L1756.12 675.2 L1756.12 551.0 L1761.28 675.2 L1761.28 551.0 L1766.44 675.2 L1766.44 551.0 L1771.61 675.2 L1771.61 551.0 L1776.77 675.2 L1776.77 551.0 L1781.93 675.2 L1781.93 551.0 L1787.10 675.2 L1787.10 551.0 L1792.26 675.2 L1792.26 551.0 L1797.43 675.2 L1797.43 551.0 L1802.59 675.2 L1802.59 551.0 L1807.75 675.2 L1807.75 551.0 L1812.92 675.2 L1812.92 551.0" stroke="#34a853" stroke-width="2" fill="none" stroke-linejoin="round"/>
<path d="M1074.50 675.2m-3 0a3 3 0 1 0 6 0a3 3 0 1 0-6 0M1074.50 551.0m-3 0a3 3 0 1 0 6 0a3 3 0 1 0-6 0M1079.66 675.2m-3 0a3 3 0 1 0 6 0a3 3 0 1 0-6 0M1079.66 551.0m-3 0a3 3 0 1 0 6 0a3 3 0 1 0-6 0M1084.83 675.2m-3 0a3 3 0 1 0 6 0a3 3 0 1 0-6 0M1084.83 551.0m-3 0a3 3 0 1 0 6 0a3 3 0 1 0-6 0M1089.99 675.2m-3 0a3 3 0 1 0 6 0a3 3 0 1 0-6 0M1089.99 551.0m-3 0a3 3 0 1 0 6 0a3 3 0 1 0-6 0M1095.15 675.2m-3 0a3 3 0 1 0 6 0a3 3 0 1 0-6 0M1095.15 551.0m-3 0a3 3 0 1 0 6 0a3 3 0 1 0-6 0M1100.32 675.2m-3 0a3 3 0 1 0 6 0a3 3 0 1 0-6 0M1100.32 551.0m-3 0a3 3 0 1 0 6 0a3 3 0 1 0-6 0M1105.48 675.2m-3 0a3 3 0 1 0 6 0a3 3 0 1 0-6 0M1105.48 551.0m-3 0a3 3 0 1 0 6 0a3 3 0 1 0-6 0M1110.65 675.2m-3 0a3 3 0 1 0 6 0a3 3 0 1 0-6 0M1110.65 551.0m-3 0a3 3 0 1 0 6 0a3 3 0 1 0-6 0M1115.81 675.2m-3 0a3 3 0 1 0 6 0a3 3 0 1 0-6 0M1115.81 551.0m-3 0a3 3 0 1 0 6 0a3 3 0 1 0-6 0M1120.97 675.2m-3 0a3 3 0 1 0 6 0a3 3 0 1 0-6 0M1120.97 551.0m-3 0a3 3 0 1 0 6 0a3 3 0 1 0-6 0M1126.14 675.2m-3 0a3 3 0 1 0 6 0a3 3 0 1 0-6 0M1126.14 551.0m-3 0a3 3 0 1 0 6 0a3 3 0 1 0-6 0M1131.30 675.2m-3 0a3 3 0 1 0 6 0a3 3 0 1 0-6 0M1131.30 551.0m-3 0a3 3 0 1 0 6 0a3 3 0 1 0-6 0M1136.46 675.2m-3 0a3 3 0 1 0 6 0a3 3 0 1 0-6 0M1136.46 551.0m-3 0a3 3 0 1 0 6 0a3 3 0 1 0-6 0M1141.63 675.2m-3 0a3 3 0 1 0 6 0a3 3 0 1 0-6 0M1141.63 551.0m-3 0a3 3 0 1 0 6 0a3 3 0 1 0-6 0M1146.79 675.2m-3 0a3 3 0 1 0 6 0a3 3 0 1 0-6 0M1146.79 551.0m-3 0a3 3 0 1 0 6 0a3 3 0 1 0-6 0M1151.96 675.2m-3 0a3 3 0 1 0 6 0a3 3 0 1 0-6 0M1151.96 551.0m-3 0a3 3 0 1 0 6 0a3 3 0 1 0-6 0M1157.12 675.2m-3 0a3 3 0 1 0 6 0a3 3 0 1 0-6 0M1157.12 551.0m-3 0a3 3 0 1 0 6 0a3 3 0 1 0-6 0M1162.28 675.2m-3 0a3 3 0 1 0 6 0a3 3 0 1 0-6 0M1162.28 551.0m-3 0a3 3 0 1 0 6 0a3 3 0 1 0-6 0M1167.45 675.2m-3 0a3 3 0 1 0 6 0a3 3 0 1 0-6 0M1167.45 551.0m-3 0a3 3 0 1 0 6 0a3 3 0 1 0-6 0M1172.61 675.2m-3 0a3 3 0 1 0 6 0a3 3 0 1 0-6 0M1172.61 551.0m-3 0a3 3 0 1 0 6 0a3 3 0 1 0-6 0M1177.78 675.2m-3 0a3 3 0 1 0 6 0a3 3 0 1 0-6 0M1177.78 551.0m-3 0a3 3 0 1 0 6 0a3 3 0 1 0-6 0M1182.94 675.2m-3 0a3 3 0 1 0 6 0a3 3 0 1 0-6 0M1182.94 551.0m-3 0a3 3 0 1 0 6 0a3 3 0 1 0-6 0M1188.10 675.2m-3 0a3 3 0 1 0 6 0a3 3 0 1 0-6 0M1188.10 551.0m-3 0a3 3 0 1 0 6 0a3 3 0 1 0-6 0M1193.27 675.2m-3 0a3 3 0 1 0 6 0a3 3 0 1 0-6 0M1193.27 551.0m-3 0a3 3 0 1 0 6 0a3 3 0 1 0-6 0M1198.43 675.2m-3 0a3 3 0 1 0 6 0a3 3 0 1 0-6 0M1198.43 551.0m-3 0a3 3 0 1 0 6 0a3 3 0 1 0-6 0M1203.59 675.2m-3 0a3 3 0 1 0 6 0a3 3 0 1 0-6 0M1203.59 551.0m-3 0a3 3 0 1 0 6 0a3 3 0 1 0-6 0M1208.76 675.2m-3 0a3 3 0 1 0 6 0a3 3 0 1 0-6 0M1208.76 551.0m-3 0a3 3 0 1 0 6 0a3 3 0 1 0-6 0M1213.92 675.2m-3 0a3 3 0 1 0 6 0a3 3 0 1 0-6 0M1213.92 551.0m-3 0a3 3 0 1 0 6 0a3 3 0 1 0-6 0M1219.09 675.2m-3 0a3 3 0 1 0 6 0a3 3 0 1 0-6 0M1219.09 551.0m-3 0a3 3 0 1 0 6 0a3 3 0 1 0-6 0M1224.25 675.2m-3 0a3 3 0 1 0 6 0a3 3 0 1 0-6 0M1224.25 551.0m-3 0a3 3 0 1 0 6 0a3 3 0 1 0-6 0M1229.41 675.2m-3 0a3 3 0 1 0 6 0a3 3 0 1 0-6 0M1229.41 551.0m-3 0a3 3 0 1 0 6 0a3 3 0 1 0-6 0M1234.58 675.2m-3 0a3 3 0 1 0 6 0a3 3 0 1 0-6 0M1234.58 551.0m-3 0a3 3 0 1 0 6 0a3 3 0 1 0-6 0M1239.74 675.2m-3 0a3 3 0 1 0 6 0a3 3 0 1 0-6 0M1239.74 551.0m-3 0a3 3 0 1 0 6 0a3 3 0 1 0-6 0M1244.90 675.2m-3 0a3 3 0 1 0 6 0a3 3 0 1 0-6 0M1244.90 551.0m-3 0a3 3 0 1 0 6 0a3 3 0 1 0-6 0M1250.07 675.2m-3 0a3 3 0 1 0 6 0a3 3 0 1 0-6 0M1250.07 551.0m-3 0a3 3 0 1 0 6 0a3 3 0 1 0-6 0M1255.23 675.2m-3 0a3 3 0 1 0 6 0a3 3 0 1 0-6 0M1255.23 551.0m-3 0a3 3 0 1 0 6 0a3 3 0 1 0-6 0M1260.39 675.2m-3 0a3 3 0 1 0 6 0a3 3 0 1 0-6 0M1260.39 551.0m-3 0a3 3 0 1 0 6 0a3 3 0 1 0-6 0M1265.56 675.2m-3 0a3 3 0 1 0 6 0a3 3 0 1 0-6 0M1265.56 551.0m-3 0a3 3 0 1 0 6 0a3 3 0 1 0-6 0M1270.72 675.2m-3 0a3 3 0 1 0 6 0a3 3 0 1 0-6 0M1275.89 675.2m-3 0a3 3 0 1 0 6 0a3 3 0 1 0-6 0M1275.89 551.0m-3 0a3 3 0 1 0 6 0a3 3 0 1 0-6 0M1281.05 675.2m-3 0a3 3 0 1 0 6 0a3 3 0 1 0-6 0M1281.05 551.0m-3 0a3 3 0 1 0 6 0a3 3 0 1 0-6 0M1286.21 675.2m-3 0a3 3 0 1 0 6 0a3 3 0 1 0-6 0M1286.21 551.0m-3 0a3 3 0 1 0 6 0a3 3 0 1 0-6 0M1291.38 675.2m-3 0a3 3 0 1 0 6 0a3 3 0 1 0-6 0M1291.38 551.0m-3 0a3 3 0 1 0 6 0a3 3 0 1 0-6 0M1296.54 675.2m-3 0a3 3 0 1 0 6 0a3 3 0 1 0-6 0M1296.54 551.0m-3 0a3 3 0 1 0 6 0a3 3 0 1 0-6 0M1301.70 675.2m-3 0a3 3 0 1 0 6 0a3 3 0 1 0-6 0M1301.70 551.0m-3 0a3 3 0 1 0 6 0a3 3 0 1 0-6 0M1306.87 675.2m-3 0a3 3 0 1 0 6 0a3 3 0 1 0-6 0M1306.87 551.0m-3 0a3 3 0 1 0 6 0a3 3 0 1 0-6 0M1312.03 675.2m-3 0a3 3 0 1 0 6 0a3 3 0 1 0-6 0M1312.03 551.0m-3 0a3 3 0 1 0 6 0a3 3 0 1 0-6 0M1317.20 675.2m-3 0a3 3 0 1 0 6 0a3 3 0 1 0-6 0M1317.20 551.0m-3 0a3 3 0 1 0 6 0a3 3 0 1 0-6 0M1322.36 675.2m-3 0a3 3 0 1 0 6 0a3 3 0 1 0-6 0M1322.36 551.0m-3 0a3 3 0 1 0 6 0a3 3 0 1 0-6 0M1327.52 675.2m-3 0a3 3 0 1 0 6 0a3 3 0 1 0-6 0M1327.52 551.0m-3 0a3 3 0 1 0 6 0a3 3 0 1 0-6 0M1332.69 675.2m-3 0a3 3 0 1 0 6 0a3 3 0 1 0-6 0M1332.69 551.0m-3 0a3 3 0 1 0 6 0a3 3 0 1 0-6 0M1337.85 675.2m-3 0a3 3 0 1 0 6 0a3 3 0 1 0-6 0M1337.85 551.0m-3 0a3 3 0 1 0 6 0a3 3 0 1 0-6 0M1343.01 675.2m-3 0a3 3 0 1 0 6 0a3 3 0 1 0-6 0M1343.01 551.0m-3 0a3 3 0 1 0 6 0a3 3 0 1 0-6 0M1348.18 675.2m-3 0a3 3 0 1 0 6 0a3 3 0 1 0-6 0M1348.18 551.0m-3 0a3 3 0 1 0 6 0a3 3 0 1 0-6 0M1353.34 675.2m-3 0a3 3 0 1 0 6 0a3 3 0 1 0-6 0M1353.34 551.0m-3 0a3 3 0 1 0 6 0a3 3 0 1 0-6 0M1358.51 675.2m-3 0a3 3 0 1 0 6 0a3 3 0 1 0-6 0M1358.51 551.0m-3 0a3 3 0 1 0 6 0a3 3 0 1 0-6 0M1363.67 551.0m-3 0a3 3 0 1 0 6 0a3 3 0 1 0-6 0M1368.83 675.2m-3 0a3 3 0 1 0 6 0a3 3 0 1 0-6 0M1368.83 551.0m-3 0a3 3 0 1 0 6 0a3 3 0 1 0-6 0M1374.00 675.2m-3 0a3 3 0 1 0 6 0a3 3 0 1 0-6 0M1374.00 551.0m-3 0a3 3 0 1 0 6 0a3 3 0 1 0-6 0M1379.16 675.2m-3 0a3 3 0 1 0 6 0a3 3 0 1 0-6 0M1379.16 551.0m-3 0a3 3 0 1 0 6 0a3 3 0 1 0-6 0M1384.33 675.2m-3 0a3 3 0 1 0 6 0a3 3 0 1 0-6 0M1384.33 551.0m-3 0a3 3 0 1 0 6 0a3 3 0 1 0-6 0M1389.49 675.2m-3 0a3 3 0 1 0 6 0a3 3 0 1 0-6 0M1389.49 551.0m-3 0a3 3 0 1 0 6 0a3 3 0 1 0-6 0M1394.65 675.2m-3 0a3 3 0 1 0 6 0a3 3 0 1 0-6 0M1394.65 551.0m-3 0a3 3 0 1 0 6 0a3 3 0 1 0-6 0M1399.82 675.2m-3 0a3 3 0 1 0 6 0a3 3 0 1 0-6 0M1399.82 551.0m-3 0a3 3 0 1 0 6 0a3 3 0 1 0-6 0M1404.98 675.2m-3 0a3 3 0 1 0 6 0a3 3 0 1 0-6 0M1404.98 551.0m-3 0a3 3 0 1 0 6 0a3 3 0 1 0-6 0M1410.14 675.2m-3 0a3 3 0 1 0 6 0a3 3 0 1 0-6 0M1410.14 551.0m-3 0a3 3 0 1 0 6 0a3 3 0 1 0-6 0M1415.31 675.2m-3 0a3 3 0 1 0 6 0a3 3 0 1 0-6 0M1415.31 551.0m-3 0a3 3 0 1 0 6 0a3 3 0 1 0-6 0M1420.47 675.2m-3 0a3 3 0 1 0 6 0a3 3 0 1 0-6 0M1420.47 551.0m-3 0a3 3 0 1 0 6 0a3 3 0 1 0-6 0M1425.63 675.2m-3 0a3 3 0 1 0 6 0a3 3 0 1 0-6 0M1425.63 551.0m-3 0a3 3 0 1 0 6 0a3 3 0 1 0-6 0M1430.80 675.2m-3 0a3 3 0 1 0 6 0a3 3 0 1 0-6 0M1430.80 551.0m-3 0a3 3 0 1 0 6 0a3 3 0 1 0-6 0M1435.96 675.2m-3 0a3 3 0 1 0 6 0a3 3 0 1 0-6 0M1435.96 551.0m-3 0a3 3 0 1 0 6 0a3 3 0 1 0-6 0M1441.13 675.2m-3 0a3 3 0 1 0 6 0a3 3 0 1 0-6 0M1441.13 551.0m-3 0a3 3 0 1 0 6 0a3 3 0 1 0-6 0M1446.29 675.2m-3 0a3 3 0 1 0 6 0a3 3 0 1 0-6 0M1446.29 551.0m-3 0a3 3 0 1 0 6 0a3 3 0 1 0-6 0M1451.45 675.2m-3 0a3 3 0 1 0 6 0a3 3 0 1 0-6 0M1451.45 551.0m-3 0a3 3 0 1 0 6 0a3 3 0 1 0-6 0M1456.62 675.2m-3 0a3 3 0 1 0 6 0a3 3 0 1 0-6 0M1456.62 551.0m-3 0a3 3 0 1 0 6 0a3 3 0 1 0-6 0M1461.78 675.2m-3 0a3 3 0 1 0 6 0a3 3 0 1 0-6 0M1461.78 551.0m-3 0a3 3 0 1 0 6 0a3 3 0 1 0-6 0M1466.95 675.2m-3 0a3 3 0 1 0 6 0a3 3 0 1 0-6 0M1466.95 551.0m-3 0a3 3 0 1 0 6 0a3 3 0 1 0-6 0M1472.11 675.2m-3 0a3 3 0 1 0 6 0a3 3 0 1 0-6 0M1472.11 551.0m-3 0a3 3 0 1 0 6 0a3 3 0 1 0-6 0M1477.27 675.2m-3 0a3 3 0 1 0 6 0a3 3 0 1 0-6 0M1477.27 551.0m-3 0a3 3 0 1 0 6 0a3 3 0 1 0-6 0M1482.44 675.2m-3 0a3 3 0 1 0 6 0a3 3 0 1 0-6 0M1482.44 551.0m-3 0a3 3 0 1 0 6 0a3 3 0 1 0-6 0M1487.60 675.2m-3 0a3 3 0 1 0 6 0a3 3 0 1 0-6 0M1487.60 551.0m-3 0a3 3 0 1 0 6 0a3 3 0 1 0-6 0M1492.76 675.2m-3 0a3 3 0 1 0 6 0a3 3 0 1 0-6 0M1492.76 551.0m-3 0a3 3 0 1 0 6 0a3 3 0 1 0-6 0M1497.93 675.2m-3 0a3 3 0 1 0 6 0a3 3 0 1 0-6 0M1497.93 551.0m-3 0a3 3 0 1 0 6 0a3 3 0 1 0-6 0M1503.09 675.2m-3 0a3 3 0 1 0 6 0a3 3 0 1 0-6 0M1503.09 551.0m-3 0a3 3 0 1 0 6 0a3 3 0 1 0-6 0M1508.26 675.2m-3 0a3 3 0 1 0 6 0a3 3 0 1 0-6 0M1508.26 551.0m-3 0a3 3 0 1 0 6 0a3 3 0 1 0-6 0M1513.42 675.2m-3 0a3 3 0 1 0 6 0a3 3 0 1 0-6 0M1513.42 551.0m-3 0a3 3 0 1 0 6 0a3 3 0 1 0-6 0M1518.58 675.2m-3 0a3 3 0 1 0 6 0a3 3 0 1 0-6 0M1518.58 551.0m-3 0a3 3 0 1 0 6 0a3 3 0 1 0-6 0M1523.75 675.2m-3 0a3 3 0 1 0 6 0a3 3 0 1 0-6 0M1523.75 551.0m-3 0a3 3 0 1 0 6 0a3 3 0 1 0-6 0M1528.91 675.2m-3 0a3 3 0 1 0 6 0a3 3 0 1 0-6 0M1528.91 551.0m-3 0a3 3 0 1 0 6 0a3 3 0 1 0-6 0M1534.07 675.2m-3 0a3 3 0 1 0 6 0a3 3 0 1 0-6 0M1534.07 551.0m-3 0a3 3 0 1 0 6 0a3 3 0 1 0-6 0M1539.24 675.2m-3 0a3 3 0 1 0 6 0a3 3 0 1 0-6 0M1539.24 551.0m-3 0a3 3 0 1 0 6 0a3 3 0 1 0-6 0M1544.40 675.2m-3 0a3 3 0 1 0 6 0a3 3 0 1 0-6 0M1544.40 551.0m-3 0a3 3 0 1 0 6 0a3 3 0 1 0-6 0M1549.57 675.2m-3 0a3 3 0 1 0 6 0a3 3 0 1 0-6 0M1549.57 551.0m-3 0a3 3 0 1 0 6 0a3 3 0 1 0-6 0M1554.73 675.2m-3 0a3 3 0 1 0 6 0a3 3 0 1 0-6 0M1554.73 551.0m-3 0a3 3 0 1 0 6 0a3 3 0 1 0-6 0M1559.89 675.2m-3 0a3 3 0 1 0 6 0a3 3 0 1 0-6 0M1559.89 551.0m-3 0a3 3 0 1 0 6 0a3 3 0 1 0-6 0M1565.06 675.2m-3 0a3 3 0 1 0 6 0a3 3 0 1 0-6 0M1565.06 551.0m-3 0a3 3 0 1 0 6 0a3 3 0 1 0-6 0M1570.22 675.2m-3 0a3 3 0 1 0 6 0a3 3 0 1 0-6 0M1570.22 551.0m-3 0a3 3 0 1 0 6 0a3 3 0 1 0-6 0M1575.38 675.2m-3 0a3 3 0 1 0 6 0a3 3 0 1 0-6 0M1575.38 551.0m-3 0a3 3 0 1 0 6 0a3 3 0 1 0-6 0M1580.55 675.2m-3 0a3 3 0 1 0 6 0a3 3 0 1 0-6 0M1580.55 551.0m-3 0a3 3 0 1 0 6 0a3 3 0 1 0-6 0M1585.71 675.2m-3 0a3 3 0 1 0 6 0a3 3 0 1 0-6 0M1585.71 551.0m-3 0a3 3 0 1 0 6 0a3 3 0 1 0-6 0M1590.88 675.2m-3 0a3 3 0 1 0 6 0a3 3 0 1 0-6 0M1590.88 551.0m-3 0a3 3 0 1 0 6 0a3 3 0 1 0-6 0M1596.04 675.2m-3 0a3 3 0 1 0 6 0a3 3 0 1 0-6 0M1596.04 551.0m-3 0a3 3 0 1 0 6 0a3 3 0 1 0-6 0M1601.20 675.2m-3 0a3 3 0 1 0 6 0a3 3 0 1 0-6 0M1601.20 551.0m-3 0a3 3 0 1 0 6 0a3 3 0 1 0-6 0M1606.37 675.2m-3 0a3 3 0 1 0 6 0a3 3 0 1 0-6 0M1606.37 551.0m-3 0a3 3 0 1 0 6 0a3 3 0 1 0-6 0M1611.53 675.2m-3 0a3 3 0 1 0 6 0a3 3 0 1 0-6 0M1611.53 551.0m-3 0a3 3 0 1 0 6 0a3 3 0 1 0-6 0M1616.69 675.2m-3 0a3 3 0 1 0 6 0a3 3 0 1 0-6 0M1616.69 551.0m-3 0a3 3 0 1 0 6 0a3 3 0 1 0-6 0M1621.86 675.2m-3 0a3 3 0 1 0 6 0a3 3 0 1 0-6 0M1621.86 551.0m-3 0a3 3 0 1 0 6 0a3 3 0 1 0-6 0M1627.02 675.2m-3 0a3 3 0 1 0 6 0a3 3 0 1 0-6 0M1627.02 551.0m-3 0a3 3 0 1 0 6 0a3 3 0 1 0-6 0M1632.18 675.2m-3 0a3 3 0 1 0 6 0a3 3 0 1 0-6 0M1632.18 551.0m-3 0a3 3 0 1 0 6 0a3 3 0 1 0-6 0M1637.35 675.2m-3 0a3 3 0 1 0 6 0a3 3 0 1 0-6 0M1637.35 551.0m-3 0a3 3 0 1 0 6 0a3 3 0 1 0-6 0M1642.51 675.2m-3 0a3 3 0 1 0 6 0a3 3 0 1 0-6 0M1642.51 551.0m-3 0a3 3 0 1 0 6 0a3 3 0 1 0-6 0M1647.68 675.2m-3 0a3 3 0 1 0 6 0a3 3 0 1 0-6 0M1647.68 551.0m-3 0a3 3 0 1 0 6 0a3 3 0 1 0-6 0M1652.84 675.2m-3 0a3 3 0 1 0 6 0a3 3 0 1 0-6 0M1652.84 551.0m-3 0a3 3 0 1 0 6 0a3 3 0 1 0-6 0M1658.00 675.2m-3 0a3 3 0 1 0 6 0a3 3 0 1 0-6 0M1658.00 551.0m-3 0a3 3 0 1 0 6 0a3 3 0 1 0-6 0M1663.17 675.2m-3 0a3 3 0 1 0 6 0a3 3 0 1 0-6 0M1663.17 551.0m-3 0a3 3 0 1 0 6 0a3 3 0 1 0-6 0M1668.33 675.2m-3 0a3 3 0 1 0 6 0a3 3 0 1 0-6 0M1668.33 551.0m-3 0a3 3 0 1 0 6 0a3 3 0 1 0-6 0M1673.49 675.2m-3 0a3 3 0 1 0 6 0a3 3 0 1 0-6 0M1673.49 551.0m-3 0a3 3 0 1 0 6 0a3 3 0 1 0-6 0M1678.66 675.2m-3 0a3 3 0 1 0 6 0a3 3 0 1 0-6 0M1678.66 551.0m-3 0a3 3 0 1 0 6 0a3 3 0 1 0-6 0M1683.82 675.2m-3 0a3 3 0 1 0 6 0a3 3 0 1 0-6 0M1683.82 551.0m-3 0a3 3 0 1 0 6 0a3 3 0 1 0-6 0M1688.99 675.2m-3 0a3 3 0 1 0 6 0a3 3 0 1 0-6 0M1688.99 551.0m-3 0a3 3 0 1 0 6 0a3 3 0 1 0-6 0M1694.15 675.2m-3 0a3 3 0 1 0 6 0a3 3 0 1 0-6 0M1694.15 551.0m-3 0a3 3 0 1 0 6 0a3 3 0 1 0-6 0M1699.31 675.2m-3 0a3 3 0 1 0 6 0a3 3 0 1 0-6 0M1699.31 551.0m-3 0a3 3 0 1 0 6 0a3 3 0 1 0-6 0M1704.48 675.2m-3 0a3 3 0 1 0 6 0a3 3 0 1 0-6 0M1704.48 551.0m-3 0a3 3 0 1 0 6 0a3 3 0 1 0-6 0M1709.64 675.2m-3 0a3 3 0 1 0 6 0a3 3 0 1 0-6 0M1709.64 551.0m-3 0a3 3 0 1 0 6 0a3 3 0 1 0-6 0M1714.81 675.2m-3 0a3 3 0 1 0 6 0a3 3 0 1 0-6 0M1714.81 551.0m-3 0a3 3 0 1 0 6 0a3 3 0 1 0-6 0M1719.97 675.2m-3 0a3 3 0 1 0 6 0a3 3 0 1 0-6 0M1719.97 551.0m-3 0a3 3 0 1 0 6 0a3 3 0 1 0-6 0M1725.13 675.2m-3 0a3 3 0 1 0 6 0a3 3 0 1 0-6 0M1725.13 551.0m-3 0a3 3 0 1 0 6 0a3 3 0 1 0-6 0M1730.30 675.2m-3 0a3 3 0 1 0 6 0a3 3 0 1 0-6 0M1730.30 551.0m-3 0a3 3 0 1 0 6 0a3 3 0 1 0-6 0M1735.46 675.2m-3 0a3 3 0 1 0 6 0a3 3 0 1 0-6 0M1735.46 551.0m-3 0a3 3 0 1 0 6 0a3 3 0 1 0-6 0M1740.62 675.2m-3 0a3 3 0 1 0 6 0a3 3 0 1 0-6 0M1740.62 551.0m-3 0a3 3 0 1 0 6 0a3 3 0 1 0-6 0M1745.79 675.2m-3 0a3 3 0 1 0 6 0a3 3 0 1 0-6 0M1745.79 551.0m-3 0a3 3 0 1 0 6 0a3 3 0 1 0-6 0M1750.95 675.2m-3 0a3 3 0 1 0 6 0a3 3 0 1 0-6 0M1750.95 551.0m-3 0a3 3 0 1 0 6 0a3 3 0 1 0-6 0M1756.12 675.2m-3 0a3 3 0 1 0 6 0a3 3 0 1 0-6 0M1756.12 551.0m-3 0a3 3 0 1 0 6 0a3 3 0 1 0-6 0M1761.28 675.2m-3 0a3 3 0 1 0 6 0a3 3 0 1 0-6 0M1761.28 551.0m-3 0a3 3 0 1 0 6 0a3 3 0 1 0-6 0M1766.44 675.2m-3 0a3 3 0 1 0 6 0a3 3 0 1 0-6 0M1766.44 551.0m-3 0a3 3 0 1 0 6 0a3 3 0 1 0-6 0M1771.61 675.2m-3 0a3 3 0 1 0 6 0a3 3 0 1 0-6 0M1771.61 551.0m-3 0a3 3 0 1 0 6 0a3 3 0 1 0-6 0M1776.77 675.2m-3 0a3 3 0 1 0 6 0a3 3 0 1 0-6 0M1776.77 551.0m-3 0a3 3 0 1 0 6 0a3 3 0 1 0-6 0M1781.93 675.2m-3 0a3 3 0 1 0 6 0a3 3 0 1 0-6 0M1781.93 551.0m-3 0a3 3 0 1 0 6 0a3 3 0 1 0-6 0M1787.10 675.2m-3 0a3 3 0 1 0 6 0a3 3 0 1 0-6 0M1787.10 551.0m-3 0a3 3 0 1 0 6 0a3 3 0 1 0-6 0M1792.26 675.2m-3 0a3 3 0 1 0 6 0a3 3 0 1 0-6 0M1792.26 551.0m-3 0a3 3 0 1 0 6 0a3 3 0 1 0-6 0M1797.43 675.2m-3 0a3 3 0 1 0 6 0a3 3 0 1 0-6 0M1797.43 551.0m-3 0a3 3 0 1 0 6 0a3 3 0 1 0-6 0M1802.59 675.2m-3 0a3 3 0 1 0 6 0a3 3 0 1 0-6 0M1802.59 551.0m-3 0a3 3 0 1 0 6 0a3 3 0 1 0-6 0M1807.75 675.2m-3 0a3 3 0 1 0 6 0a3 3 0 1 0-6 0M1807.75 551.0m-3 0a3 3 0 1 0 6 0a3 3 0 1 0-6 0M1812.92 675.2m-3 0a3 3 0 1 0 6 0a3 3 0 1 0-6 0M1812.92 551.0m-3 0a3 3 0 1 0 6 0a3 3 0 1 0-6 0" fill="#34a853"/>
<rect x="1029" y="524" width="174.700" height="29.600" fill="#fff"/>
<path d="M1034.300 539.800H1063.700" stroke="#34a853" stroke-width="2"/><circle cx="1049" cy="539.800" r="3" fill="#34a853"/>
<text x="1069.400" y="544.200" letter-spacing=".15">energy_accumulator</text>
<text x="1028" y="586.200" text-anchor="end" letter-spacing=".2">25.0k</text>
<text x="1028" y="658.900" text-anchor="end" letter-spacing=".2">20.0k</text>
<text x="1042.5" y="698.600" text-anchor="middle" letter-spacing=".4">12:00:00AM</text>
<text x="1166.4" y="698.600" text-anchor="middle" letter-spacing=".4">02:00:00AM</text>
<text x="1290.4" y="698.600" text-anchor="middle" letter-spacing=".4">04:00:00AM</text>
<text x="1414.3" y="698.600" text-anchor="middle" letter-spacing=".4">06:00:00AM</text>
<text x="1538.2" y="698.600" text-anchor="middle" letter-spacing=".4">08:00:00AM</text>
<text x="1662.2" y="698.600" text-anchor="middle" letter-spacing=".4">10:00:00AM</text>
<text x="1786.1" y="698.600" text-anchor="middle" letter-spacing=".4">12:00:00PM</text>
<text x="1043" y="714.800" text-anchor="middle" letter-spacing=".45">16 Jul, 2025</text>
<rect x="1019" y="500.600" width="191" height="77.600" fill="none" stroke="#e7181c" stroke-width="3.600"/>
<g fill="#c4c4c4" stroke="none"><path d="M1867.200 506.2l-7 5.800h1.900v5.400h3.700v-3.800h2.800v3.800h3.700v-5.400h1.900l-2.600-2.100v-2.700h-1.600v1.400z"/><path d="M1838 504.5h4v1.300h-2.700v2.700h-1.300zM1851 504.5h-4v1.300h2.700v2.700h1.300zM1838 519.5h4v-1.300h-2.700v-2.700h-1.300zM1851 519.5h-4v-1.300h2.700v-2.700h1.300z"/><path d="M1841.500 509.5h6v5h-6z" fill="none" stroke="#c4c4c4" stroke-width="1.200"/></g>
<path d="M1044.5 872V1036M1168.4 872V1036M1292.4 872V1036M1416.3 872V1036M1540.2 872V1036M1664.2 872V1036M1788.1 872V1036M1029 912.5H1859M1029 952.1H1859M1029 991.7H1859M1029 1031.3H1859" stroke="#eee" stroke-width="1" fill="none"/>
<path d="M1074.50 972.3 L1079.66 972.3 L1084.83 972.3 L1089.99 972.3 L1095.15 972.3 L1100.32 906.5 L1105.48 906.5 L1110.65 906.5 L1115.81 906.5 L1120.97 906.5 L1126.14 906.5 L1131.30 906.5 L1136.46 906.5 L1141.63 906.5 L1146.79 906.5 L1151.96 906.5 L1157.12 906.5 L1162.28 906.5 L1167.45 906.5 L1172.61 906.5 L1177.78 906.5 L1182.94 906.5 L1188.10 906.5 L1193.27 906.5 L1198.43 906.5 L1203.59 906.5 L1208.76 906.5 L1213.92 906.5 L1219.09 906.5 L1224.25 906.5 L1229.41 906.5 L1234.58 906.5 L1239.74 884.6 L1244.90 884.6 L1250.07 884.6 L1255.23 884.6 L1260.39 884.6 L1265.56 884.6 L1275.89 884.6 L1281.05 884.6 L1286.21 884.6 L1291.38 884.6 L1297.54 920.8 L1302.70 920.8 L1307.87 920.8 L1313.03 920.8 L1318.20 920.8 L1322.36 884.6 L1327.52 884.6 L1332.69 884.6 L1337.85 884.6 L1343.01 884.6 L1348.18 884.6 L1353.34 884.6 L1358.51 884.6 L1363.67 884.6 L1368.83 884.6 L1374.00 884.6 L1379.16 942.0 L1384.33 942.0 L1389.49 942.0 L1394.65 942.0 L1399.82 942.0 L1404.98 942.0 L1410.14 942.0 L1415.31 942.0 L1420.47 942.0 L1425.63 942.0 L1430.80 942.0 L1435.96 942.0 L1441.13 942.0 L1446.29 942.0 L1451.45 942.0 L1456.62 942.0 L1461.78 942.0 L1466.95 942.0 L1472.11 942.0 L1477.27 942.0 L1482.44 942.0 L1487.60 942.0 L1492.76 942.0 L1497.93 942.0 L1503.09 942.0 L1508.26 942.0 L1513.42 942.0 L1518.58 942.0 L1523.75 942.0 L1528.91 942.0 L1534.07 942.0 L1539.24 942.0 L1544.40 942.0 L1549.57 942.0 L1554.73 942.0 L1559.89 942.0 L1565.06 942.0 L1570.22 942.0 L1575.38 942.0 L1580.55 942.0 L1585.71 942.0 L1590.88 930.0 L1596.04 930.0 L1601.20 930.0 L1606.37 930.0 L1611.53 930.0 L1616.69 930.0 L1621.86 930.0 L1627.02 930.0 L1632.18 930.0 L1637.35 930.0 L1642.51 930.0 L1647.68 930.0 L1652.84 930.0 L1658.00 930.0 L1663.17 930.0 L1668.33 930.0 L1673.49 930.0 L1678.66 930.0 L1683.82 930.0 L1688.99 930.0 L1694.15 930.0 L1699.31 930.0 L1704.48 930.0 L1709.64 930.0 L1714.81 930.0 L1719.97 930.0 L1725.13 930.0 L1730.30 930.0 L1735.46 930.0 L1740.62 930.0 L1745.79 930.0 L1750.95 930.0 L1756.12 930.0 L1761.28 930.0 L1766.44 930.0 L1771.61 930.0 L1776.77 930.0 L1781.93 930.0 L1787.10 930.0 L1792.26 930.0 L1797.43 930.0 L1802.59 930.0 L1807.75 930.0 L1812.92 930.0" stroke="#78909c" stroke-width="2" fill="none" stroke-linejoin="round"/>
<path d="M1074.50 972.3m-3 0a3 3 0 1 0 6 0a3 3 0 1 0-6 0M1079.66 972.3m-3 0a3 3 0 1 0 6 0a3 3 0 1 0-6 0M1084.83 972.3m-3 0a3 3 0 1 0 6 0a3 3 0 1 0-6 0M1089.99 972.3m-3 0a3 3 0 1 0 6 0a3 3 0 1 0-6 0M1095.15 972.3m-3 0a3 3 0 1 0 6 0a3 3 0 1 0-6 0M1100.32 906.5m-3 0a3 3 0 1 0 6 0a3 3 0 1 0-6 0M1105.48 906.5m-3 0a3 3 0 1 0 6 0a3 3 0 1 0-6 0M1110.65 906.5m-3 0a3 3 0 1 0 6 0a3 3 0 1 0-6 0M1115.81 906.5m-3 0a3 3 0 1 0 6 0a3 3 0 1 0-6 0M1120.97 906.5m-3 0a3 3 0 1 0 6 0a3 3 0 1 0-6 0M1126.14 906.5m-3 0a3 3 0 1 0 6 0a3 3 0 1 0-6 0M1131.30 906.5m-3 0a3 3 0 1 0 6 0a3 3 0 1 0-6 0M1136.46 906.5m-3 0a3 3 0 1 0 6 0a3 3 0 1 0-6 0M1141.63 906.5m-3 0a3 3 0 1 0 6 0a3 3 0 1 0-6 0M1146.79 906.5m-3 0a3 3 0 1 0 6 0a3 3 0 1 0-6 0M1151.96 906.5m-3 0a3 3 0 1 0 6 0a3 3 0 1 0-6 0M1157.12 906.5m-3 0a3 3 0 1 0 6 0a3 3 0 1 0-6 0M1162.28 906.5m-3 0a3 3 0 1 0 6 0a3 3 0 1 0-6 0M1167.45 906.5m-3 0a3 3 0 1 0 6 0a3 3 0 1 0-6 0M1172.61 906.5m-3 0a3 3 0 1 0 6 0a3 3 0 1 0-6 0M1177.78 906.5m-3 0a3 3 0 1 0 6 0a3 3 0 1 0-6 0M1182.94 906.5m-3 0a3 3 0 1 0 6 0a3 3 0 1 0-6 0M1188.10 906.5m-3 0a3 3 0 1 0 6 0a3 3 0 1 0-6 0M1193.27 906.5m-3 0a3 3 0 1 0 6 0a3 3 0 1 0-6 0M1198.43 906.5m-3 0a3 3 0 1 0 6 0a3 3 0 1 0-6 0M1203.59 906.5m-3 0a3 3 0 1 0 6 0a3 3 0 1 0-6 0M1208.76 906.5m-3 0a3 3 0 1 0 6 0a3 3 0 1 0-6 0M1213.92 906.5m-3 0a3 3 0 1 0 6 0a3 3 0 1 0-6 0M1219.09 906.5m-3 0a3 3 0 1 0 6 0a3 3 0 1 0-6 0M1224.25 906.5m-3 0a3 3 0 1 0 6 0a3 3 0 1 0-6 0M1229.41 906.5m-3 0a3 3 0 1 0 6 0a3 3 0 1 0-6 0M1234.58 906.5m-3 0a3 3 0 1 0 6 0a3 3 0 1 0-6 0M1239.74 884.6m-3 0a3 3 0 1 0 6 0a3 3 0 1 0-6 0M1244.90 884.6m-3 0a3 3 0 1 0 6 0a3 3 0 1 0-6 0M1250.07 884.6m-3 0a3 3 0 1 0 6 0a3 3 0 1 0-6 0M1255.23 884.6m-3 0a3 3 0 1 0 6 0a3 3 0 1 0-6 0M1260.39 884.6m-3 0a3 3 0 1 0 6 0a3 3 0 1 0-6 0M1265.56 884.6m-3 0a3 3 0 1 0 6 0a3 3 0 1 0-6 0M1275.89 884.6m-3 0a3 3 0 1 0 6 0a3 3 0 1 0-6 0M1281.05 884.6m-3 0a3 3 0 1 0 6 0a3 3 0 1 0-6 0M1286.21 884.6m-3 0a3 3 0 1 0 6 0a3 3 0 1 0-6 0M1291.38 884.6m-3 0a3 3 0 1 0 6 0a3 3 0 1 0-6 0M1297.54 920.8m-3 0a3 3 0 1 0 6 0a3 3 0 1 0-6 0M1302.70 920.8m-3 0a3 3 0 1 0 6 0a3 3 0 1 0-6 0M1307.87 920.8m-3 0a3 3 0 1 0 6 0a3 3 0 1 0-6 0M1313.03 920.8m-3 0a3 3 0 1 0 6 0a3 3 0 1 0-6 0M1318.20 920.8m-3 0a3 3 0 1 0 6 0a3 3 0 1 0-6 0M1322.36 884.6m-3 0a3 3 0 1 0 6 0a3 3 0 1 0-6 0M1327.52 884.6m-3 0a3 3 0 1 0 6 0a3 3 0 1 0-6 0M1332.69 884.6m-3 0a3 3 0 1 0 6 0a3 3 0 1 0-6 0M1337.85 884.6m-3 0a3 3 0 1 0 6 0a3 3 0 1 0-6 0M1343.01 884.6m-3 0a3 3 0 1 0 6 0a3 3 0 1 0-6 0M1348.18 884.6m-3 0a3 3 0 1 0 6 0a3 3 0 1 0-6 0M1353.34 884.6m-3 0a3 3 0 1 0 6 0a3 3 0 1 0-6 0M1358.51 884.6m-3 0a3 3 0 1 0 6 0a3 3 0 1 0-6 0M1363.67 884.6m-3 0a3 3 0 1 0 6 0a3 3 0 1 0-6 0M1368.83 884.6m-3 0a3 3 0 1 0 6 0a3 3 0 1 0-6 0M1374.00 884.6m-3 0a3 3 0 1 0 6 0a3 3 0 1 0-6 0M1379.16 942.0m-3 0a3 3 0 1 0 6 0a3 3 0 1 0-6 0M1384.33 942.0m-3 0a3 3 0 1 0 6 0a3 3 0 1 0-6 0M1389.49 942.0m-3 0a3 3 0 1 0 6 0a3 3 0 1 0-6 0M1394.65 942.0m-3 0a3 3 0 1 0 6 0a3 3 0 1 0-6 0M1399.82 942.0m-3 0a3 3 0 1 0 6 0a3 3 0 1 0-6 0M1404.98 942.0m-3 0a3 3 0 1 0 6 0a3 3 0 1 0-6 0M1410.14 942.0m-3 0a3 3 0 1 0 6 0a3 3 0 1 0-6 0M1415.31 942.0m-3 0a3 3 0 1 0 6 0a3 3 0 1 0-6 0M1420.47 942.0m-3 0a3 3 0 1 0 6 0a3 3 0 1 0-6 0M1425.63 942.0m-3 0a3 3 0 1 0 6 0a3 3 0 1 0-6 0M1430.80 942.0m-3 0a3 3 0 1 0 6 0a3 3 0 1 0-6 0M1435.96 942.0m-3 0a3 3 0 1 0 6 0a3 3 0 1 0-6 0M1441.13 942.0m-3 0a3 3 0 1 0 6 0a3 3 0 1 0-6 0M1446.29 942.0m-3 0a3 3 0 1 0 6 0a3 3 0 1 0-6 0M1451.45 942.0m-3 0a3 3 0 1 0 6 0a3 3 0 1 0-6 0M1456.62 942.0m-3 0a3 3 0 1 0 6 0a3 3 0 1 0-6 0M1461.78 942.0m-3 0a3 3 0 1 0 6 0a3 3 0 1 0-6 0M1466.95 942.0m-3 0a3 3 0 1 0 6 0a3 3 0 1 0-6 0M1472.11 942.0m-3 0a3 3 0 1 0 6 0a3 3 0 1 0-6 0M1477.27 942.0m-3 0a3 3 0 1 0 6 0a3 3 0 1 0-6 0M1482.44 942.0m-3 0a3 3 0 1 0 6 0a3 3 0 1 0-6 0M1487.60 942.0m-3 0a3 3 0 1 0 6 0a3 3 0 1 0-6 0M1492.76 942.0m-3 0a3 3 0 1 0 6 0a3 3 0 1 0-6 0M1497.93 942.0m-3 0a3 3 0 1 0 6 0a3 3 0 1 0-6 0M1503.09 942.0m-3 0a3 3 0 1 0 6 0a3 3 0 1 0-6 0M1508.26 942.0m-3 0a3 3 0 1 0 6 0a3 3 0 1 0-6 0M1513.42 942.0m-3 0a3 3 0 1 0 6 0a3 3 0 1 0-6 0M1518.58 942.0m-3 0a3 3 0 1 0 6 0a3 3 0 1 0-6 0M1523.75 942.0m-3 0a3 3 0 1 0 6 0a3 3 0 1 0-6 0M1528.91 942.0m-3 0a3 3 0 1 0 6 0a3 3 0 1 0-6 0M1534.07 942.0m-3 0a3 3 0 1 0 6 0a3 3 0 1 0-6 0M1539.24 942.0m-3 0a3 3 0 1 0 6 0a3 3 0 1 0-6 0M1544.40 942.0m-3 0a3 3 0 1 0 6 0a3 3 0 1 0-6 0M1549.57 942.0m-3 0a3 3 0 1 0 6 0a3 3 0 1 0-6 0M1554.73 942.0m-3 0a3 3 0 1 0 6 0a3 3 0 1 0-6 0M1559.89 942.0m-3 0a3 3 0 1 0 6 0a3 3 0 1 0-6 0M1565.06 942.0m-3 0a3 3 0 1 0 6 0a3 3 0 1 0-6 0M1570.22 942.0m-3 0a3 3 0 1 0 6 0a3 3 0 1 0-6 0M1575.38 942.0m-3 0a3 3 0 1 0 6 0a3 3 0 1 0-6 0M1580.55 942.0m-3 0a3 3 0 1 0 6 0a3 3 0 1 0-6 0M1585.71 942.0m-3 0a3 3 0 1 0 6 0a3 3 0 1 0-6 0M1590.88 930.0m-3 0a3 3 0 1 0 6 0a3 3 0 1 0-6 0M1596.04 930.0m-3 0a3 3 0 1 0 6 0a3 3 0 1 0-6 0M1601.20 930.0m-3 0a3 3 0 1 0 6 0a3 3 0 1 0-6 0M1606.37 930.0m-3 0a3 3 0 1 0 6 0a3 3 0 1 0-6 0M1611.53 930.0m-3 0a3 3 0 1 0 6 0a3 3 0 1 0-6 0M1616.69 930.0m-3 0a3 3 0 1 0 6 0a3 3 0 1 0-6 0M1621.86 930.0m-3 0a3 3 0 1 0 6 0a3 3 0 1 0-6 0M1627.02 930.0m-3 0a3 3 0 1 0 6 0a3 3 0 1 0-6 0M1632.18 930.0m-3 0a3 3 0 1 0 6 0a3 3 0 1 0-6 0M1637.35 930.0m-3 0a3 3 0 1 0 6 0a3 3 0 1 0-6 0M1642.51 930.0m-3 0a3 3 0 1 0 6 0a3 3 0 1 0-6 0M1647.68 930.0m-3 0a3 3 0 1 0 6 0a3 3 0 1 0-6 0M1652.84 930.0m-3 0a3 3 0 1 0 6 0a3 3 0 1 0-6 0M1658.00 930.0m-3 0a3 3 0 1 0 6 0a3 3 0 1 0-6 0M1663.17 930.0m-3 0a3 3 0 1 0 6 0a3 3 0 1 0-6 0M1668.33 930.0m-3 0a3 3 0 1 0 6 0a3 3 0 1 0-6 0M1673.49 930.0m-3 0a3 3 0 1 0 6 0a3 3 0 1 0-6 0M1678.66 930.0m-3 0a3 3 0 1 0 6 0a3 3 0 1 0-6 0M1683.82 930.0m-3 0a3 3 0 1 0 6 0a3 3 0 1 0-6 0M1688.99 930.0m-3 0a3 3 0 1 0 6 0a3 3 0 1 0-6 0M1694.15 930.0m-3 0a3 3 0 1 0 6 0a3 3 0 1 0-6 0M1699.31 930.0m-3 0a3 3 0 1 0 6 0a3 3 0 1 0-6 0M1704.48 930.0m-3 0a3 3 0 1 0 6 0a3 3 0 1 0-6 0M1709.64 930.0m-3 0a3 3 0 1 0 6 0a3 3 0 1 0-6 0M1714.81 930.0m-3 0a3 3 0 1 0 6 0a3 3 0 1 0-6 0M1719.97 930.0m-3 0a3 3 0 1 0 6 0a3 3 0 1 0-6 0M1725.13 930.0m-3 0a3 3 0 1 0 6 0a3 3 0 1 0-6 0M1730.30 930.0m-3 0a3 3 0 1 0 6 0a3 3 0 1 0-6 0M1735.46 930.0m-3 0a3 3 0 1 0 6 0a3 3 0 1 0-6 0M1740.62 930.0m-3 0a3 3 0 1 0 6 0a3 3 0 1 0-6 0M1745.79 930.0m-3 0a3 3 0 1 0 6 0a3 3 0 1 0-6 0M1750.95 930.0m-3 0a3 3 0 1 0 6 0a3 3 0 1 0-6 0M1756.12 930.0m-3 0a3 3 0 1 0 6 0a3 3 0 1 0-6 0M1761.28 930.0m-3 0a3 3 0 1 0 6 0a3 3 0 1 0-6 0M1766.44 930.0m-3 0a3 3 0 1 0 6 0a3 3 0 1 0-6 0M1771.61 930.0m-3 0a3 3 0 1 0 6 0a3 3 0 1 0-6 0M1776.77 930.0m-3 0a3 3 0 1 0 6 0a3 3 0 1 0-6 0M1781.93 930.0m-3 0a3 3 0 1 0 6 0a3 3 0 1 0-6 0M1787.10 930.0m-3 0a3 3 0 1 0 6 0a3 3 0 1 0-6 0M1792.26 930.0m-3 0a3 3 0 1 0 6 0a3 3 0 1 0-6 0M1797.43 930.0m-3 0a3 3 0 1 0 6 0a3 3 0 1 0-6 0M1802.59 930.0m-3 0a3 3 0 1 0 6 0a3 3 0 1 0-6 0M1807.75 930.0m-3 0a3 3 0 1 0 6 0a3 3 0 1 0-6 0M1812.92 930.0m-3 0a3 3 0 1 0 6 0a3 3 0 1 0-6 0" fill="#78909c"/>
<path d="M1074.50 1019.0 L1079.66 1020.0 L1084.83 1020.8 L1089.99 1020.0 L1095.15 1020.0 L1100.32 1017.8 L1105.48 1017.8 L1110.65 1020.0 L1115.81 1019.0 L1120.97 1019.0 L1126.14 1020.0 L1131.30 1020.0 L1136.46 1020.0 L1141.63 1020.0 L1146.79 1020.0 L1151.96 1019.0 L1157.12 1020.0 L1162.28 1020.0 L1167.45 1020.0 L1172.61 1020.0 L1177.78 1020.0 L1182.94 1017.8 L1188.10 1020.0 L1193.27 1020.0 L1198.43 1020.8 L1203.59 1017.8 L1208.76 1020.0 L1213.92 1020.0 L1219.09 1020.0 L1224.25 1020.0 L1229.41 1020.0 L1234.58 1020.0 L1239.74 1020.8 L1244.90 1020.0 L1250.07 1020.0 L1255.23 1020.0 L1260.39 1020.0 L1265.56 1017.8 L1270.72 1019.0 L1275.89 1019.0 L1281.05 1020.0 L1286.21 1020.0 L1291.38 1020.0 L1296.54 1020.8 L1301.70 1020.0 L1306.87 1020.8 L1312.03 1020.8 L1317.20 1020.0 L1322.36 1020.0 L1327.52 1020.0 L1332.69 1020.0 L1337.85 1020.0 L1343.01 1020.0 L1348.18 1020.0 L1353.34 1020.0 L1358.51 1019.0 L1363.67 1020.0 L1368.83 1020.0 L1374.00 1020.0 L1379.16 1020.0 L1384.33 1020.0 L1389.49 1019.0 L1394.65 1020.0 L1399.82 1020.0 L1404.98 1019.0 L1410.14 1017.8 L1415.31 1020.0 L1420.47 1020.0 L1425.63 1017.8 L1430.80 1020.0 L1435.96 1020.0 L1441.13 1019.0 L1446.29 1019.0 L1451.45 1020.0 L1456.62 1020.0 L1461.78 1017.8 L1466.95 1020.0 L1472.11 1017.8 L1477.27 1020.0 L1482.44 1020.8 L1487.60 1020.0 L1492.76 1020.0 L1497.93 1020.0 L1503.09 1020.0 L1508.26 1020.8 L1513.42 1017.8 L1518.58 1020.0 L1523.75 1017.8 L1528.91 1019.0 L1534.07 1020.0 L1539.24 1020.0 L1544.40 1019.0 L1549.57 1017.8 L1554.73 1020.0 L1559.89 1020.8 L1565.06 1020.0 L1570.22 1020.0 L1575.38 1020.8 L1580.55 1020.0 L1585.71 1020.0 L1590.88 1020.0 L1596.04 1020.0 L1601.20 1020.0 L1606.37 1020.0 L1611.53 1020.0 L1616.69 1020.0 L1621.86 1020.0 L1627.02 1020.0 L1632.18 1019.0 L1637.35 1020.8 L1642.51 1020.0 L1647.68 1020.0 L1652.84 1020.0 L1658.00 1017.8 L1663.17 1020.0 L1668.33 1020.0 L1673.49 1017.8 L1678.66 1020.0 L1683.82 1020.0 L1688.99 1017.8 L1694.15 1020.0 L1699.31 1020.0 L1704.48 1020.0 L1709.64 1020.8 L1714.81 1020.0 L1719.97 1018.2 L1725.13 1022.2 L1730.30 1024.2 L1735.46 1022.2 L1740.62 1022.2 L1745.79 1022.2 L1750.95 1022.2 L1756.12 1022.2 L1761.28 1022.2 L1766.44 1022.2 L1771.61 1022.2 L1776.77 1022.2 L1781.93 1022.2 L1787.10 1022.2 L1792.26 1022.2 L1797.43 1022.2 L1802.59 1022.2 L1807.75 1022.2 L1812.92 1022.2" stroke="#34a853" stroke-width="2" fill="none" stroke-linejoin="round"/>
<path d="M1074.50 1019.0m-3 0a3 3 0 1 0 6 0a3 3 0 1 0-6 0M1079.66 1020.0m-3 0a3 3 0 1 0 6 0a3 3 0 1 0-6 0M1084.83 1020.8m-3 0a3 3 0 1 0 6 0a3 3 0 1 0-6 0M1089.99 1020.0m-3 0a3 3 0 1 0 6 0a3 3 0 1 0-6 0M1095.15 1020.0m-3 0a3 3 0 1 0 6 0a3 3 0 1 0-6 0M1100.32 1017.8m-3 0a3 3 0 1 0 6 0a3 3 0 1 0-6 0M1105.48 1017.8m-3 0a3 3 0 1 0 6 0a3 3 0 1 0-6 0M1110.65 1020.0m-3 0a3 3 0 1 0 6 0a3 3 0 1 0-6 0M1115.81 1019.0m-3 0a3 3 0 1 0 6 0a3 3 0 1 0-6 0M1120.97 1019.0m-3 0a3 3 0 1 0 6 0a3 3 0 1 0-6 0M1126.14 1020.0m-3 0a3 3 0 1 0 6 0a3 3 0 1 0-6 0M1131.30 1020.0m-3 0a3 3 0 1 0 6 0a3 3 0 1 0-6 0M1136.46 1020.0m-3 0a3 3 0 1 0 6 0a3 3 0 1 0-6 0M1141.63 1020.0m-3 0a3 3 0 1 0 6 0a3 3 0 1 0-6 0M1146.79 1020.0m-3 0a3 3 0 1 0 6 0a3 3 0 1 0-6 0M1151.96 1019.0m-3 0a3 3 0 1 0 6 0a3 3 0 1 0-6 0M1157.12 1020.0m-3 0a3 3 0 1 0 6 0a3 3 0 1 0-6 0M1162.28 1020.0m-3 0a3 3 0 1 0 6 0a3 3 0 1 0-6 0M1167.45 1020.0m-3 0a3 3 0 1 0 6 0a3 3 0 1 0-6 0M1172.61 1020.0m-3 0a3 3 0 1 0 6 0a3 3 0 1 0-6 0M1177.78 1020.0m-3 0a3 3 0 1 0 6 0a3 3 0 1 0-6 0M1182.94 1017.8m-3 0a3 3 0 1 0 6 0a3 3 0 1 0-6 0M1188.10 1020.0m-3 0a3 3 0 1 0 6 0a3 3 0 1 0-6 0M1193.27 1020.0m-3 0a3 3 0 1 0 6 0a3 3 0 1 0-6 0M1198.43 1020.8m-3 0a3 3 0 1 0 6 0a3 3 0 1 0-6 0M1203.59 1017.8m-3 0a3 3 0 1 0 6 0a3 3 0 1 0-6 0M1208.76 1020.0m-3 0a3 3 0 1 0 6 0a3 3 0 1 0-6 0M1213.92 1020.0m-3 0a3 3 0 1 0 6 0a3 3 0 1 0-6 0M1219.09 1020.0m-3 0a3 3 0 1 0 6 0a3 3 0 1 0-6 0M1224.25 1020.0m-3 0a3 3 0 1 0 6 0a3 3 0 1 0-6 0M1229.41 1020.0m-3 0a3 3 0 1 0 6 0a3 3 0 1 0-6 0M1234.58 1020.0m-3 0a3 3 0 1 0 6 0a3 3 0 1 0-6 0M1239.74 1020.8m-3 0a3 3 0 1 0 6 0a3 3 0 1 0-6 0M1244.90 1020.0m-3 0a3 3 0 1 0 6 0a3 3 0 1 0-6 0M1250.07 1020.0m-3 0a3 3 0 1 0 6 0a3 3 0 1 0-6 0M1255.23 1020.0m-3 0a3 3 0 1 0 6 0a3 3 0 1 0-6 0M1260.39 1020.0m-3 0a3 3 0 1 0 6 0a3 3 0 1 0-6 0M1265.56 1017.8m-3 0a3 3 0 1 0 6 0a3 3 0 1 0-6 0M1270.72 1019.0m-3 0a3 3 0 1 0 6 0a3 3 0 1 0-6 0M1275.89 1019.0m-3 0a3 3 0 1 0 6 0a3 3 0 1 0-6 0M1281.05 1020.0m-3 0a3 3 0 1 0 6 0a3 3 0 1 0-6 0M1286.21 1020.0m-3 0a3 3 0 1 0 6 0a3 3 0 1 0-6 0M1291.38 1020.0m-3 0a3 3 0 1 0 6 0a3 3 0 1 0-6 0M1296.54 1020.8m-3 0a3 3 0 1 0 6 0a3 3 0 1 0-6 0M1301.70 1020.0m-3 0a3 3 0 1 0 6 0a3 3 0 1 0-6 0M1306.87 1020.8m-3 0a3 3 0 1 0 6 0a3 3 0 1 0-6 0M1312.03 1020.8m-3 0a3 3 0 1 0 6 0a3 3 0 1 0-6 0M1317.20 1020.0m-3 0a3 3 0 1 0 6 0a3 3 0 1 0-6 0M1322.36 1020.0m-3 0a3 3 0 1 0 6 0a3 3 0 1 0-6 0M1327.52 1020.0m-3 0a3 3 0 1 0 6 0a3 3 0 1 0-6 0M1332.69 1020.0m-3 0a3 3 0 1 0 6 0a3 3 0 1 0-6 0M1337.85 1020.0m-3 0a3 3 0 1 0 6 0a3 3 0 1 0-6 0M1343.01 1020.0m-3 0a3 3 0 1 0 6 0a3 3 0 1 0-6 0M1348.18 1020.0m-3 0a3 3 0 1 0 6 0a3 3 0 1 0-6 0M1353.34 1020.0m-3 0a3 3 0 1 0 6 0a3 3 0 1 0-6 0M1358.51 1019.0m-3 0a3 3 0 1 0 6 0a3 3 0 1 0-6 0M1363.67 1020.0m-3 0a3 3 0 1 0 6 0a3 3 0 1 0-6 0M1368.83 1020.0m-3 0a3 3 0 1 0 6 0a3 3 0 1 0-6 0M1374.00 1020.0m-3 0a3 3 0 1 0 6 0a3 3 0 1 0-6 0M1379.16 1020.0m-3 0a3 3 0 1 0 6 0a3 3 0 1 0-6 0M1384.33 1020.0m-3 0a3 3 0 1 0 6 0a3 3 0 1 0-6 0M1389.49 1019.0m-3 0a3 3 0 1 0 6 0a3 3 0 1 0-6 0M1394.65 1020.0m-3 0a3 3 0 1 0 6 0a3 3 0 1 0-6 0M1399.82 1020.0m-3 0a3 3 0 1 0 6 0a3 3 0 1 0-6 0M1404.98 1019.0m-3 0a3 3 0 1 0 6 0a3 3 0 1 0-6 0M1410.14 1017.8m-3 0a3 3 0 1 0 6 0a3 3 0 1 0-6 0M1415.31 1020.0m-3 0a3 3 0 1 0 6 0a3 3 0 1 0-6 0M1420.47 1020.0m-3 0a3 3 0 1 0 6 0a3 3 0 1 0-6 0M1425.63 1017.8m-3 0a3 3 0 1 0 6 0a3 3 0 1 0-6 0M1430.80 1020.0m-3 0a3 3 0 1 0 6 0a3 3 0 1 0-6 0M1435.96 1020.0m-3 0a3 3 0 1 0 6 0a3 3 0 1 0-6 0M1441.13 1019.0m-3 0a3 3 0 1 0 6 0a3 3 0 1 0-6 0M1446.29 1019.0m-3 0a3 3 0 1 0 6 0a3 3 0 1 0-6 0M1451.45 1020.0m-3 0a3 3 0 1 0 6 0a3 3 0 1 0-6 0M1456.62 1020.0m-3 0a3 3 0 1 0 6 0a3 3 0 1 0-6 0M1461.78 1017.8m-3 0a3 3 0 1 0 6 0a3 3 0 1 0-6 0M1466.95 1020.0m-3 0a3 3 0 1 0 6 0a3 3 0 1 0-6 0M1472.11 1017.8m-3 0a3 3 0 1 0 6 0a3 3 0 1 0-6 0M1477.27 1020.0m-3 0a3 3 0 1 0 6 0a3 3 0 1 0-6 0M1482.44 1020.8m-3 0a3 3 0 1 0 6 0a3 3 0 1 0-6 0M1487.60 1020.0m-3 0a3 3 0 1 0 6 0a3 3 0 1 0-6 0M1492.76 1020.0m-3 0a3 3 0 1 0 6 0a3 3 0 1 0-6 0M1497.93 1020.0m-3 0a3 3 0 1 0 6 0a3 3 0 1 0-6 0M1503.09 1020.0m-3 0a3 3 0 1 0 6 0a3 3 0 1 0-6 0M1508.26 1020.8m-3 0a3 3 0 1 0 6 0a3 3 0 1 0-6 0M1513.42 1017.8m-3 0a3 3 0 1 0 6 0a3 3 0 1 0-6 0M1518.58 1020.0m-3 0a3 3 0 1 0 6 0a3 3 0 1 0-6 0M1523.75 1017.8m-3 0a3 3 0 1 0 6 0a3 3 0 1 0-6 0M1528.91 1019.0m-3 0a3 3 0 1 0 6 0a3 3 0 1 0-6 0M1534.07 1020.0m-3 0a3 3 0 1 0 6 0a3 3 0 1 0-6 0M1539.24 1020.0m-3 0a3 3 0 1 0 6 0a3 3 0 1 0-6 0M1544.40 1019.0m-3 0a3 3 0 1 0 6 0a3 3 0 1 0-6 0M1549.57 1017.8m-3 0a3 3 0 1 0 6 0a3 3 0 1 0-6 0M1554.73 1020.0m-3 0a3 3 0 1 0 6 0a3 3 0 1 0-6 0M1559.89 1020.8m-3 0a3 3 0 1 0 6 0a3 3 0 1 0-6 0M1565.06 1020.0m-3 0a3 3 0 1 0 6 0a3 3 0 1 0-6 0M1570.22 1020.0m-3 0a3 3 0 1 0 6 0a3 3 0 1 0-6 0M1575.38 1020.8m-3 0a3 3 0 1 0 6 0a3 3 0 1 0-6 0M1580.55 1020.0m-3 0a3 3 0 1 0 6 0a3 3 0 1 0-6 0M1585.71 1020.0m-3 0a3 3 0 1 0 6 0a3 3 0 1 0-6 0M1590.88 1020.0m-3 0a3 3 0 1 0 6 0a3 3 0 1 0-6 0M1596.04 1020.0m-3 0a3 3 0 1 0 6 0a3 3 0 1 0-6 0M1601.20 1020.0m-3 0a3 3 0 1 0 6 0a3 3 0 1 0-6 0M1606.37 1020.0m-3 0a3 3 0 1 0 6 0a3 3 0 1 0-6 0M1611.53 1020.0m-3 0a3 3 0 1 0 6 0a3 3 0 1 0-6 0M1616.69 1020.0m-3 0a3 3 0 1 0 6 0a3 3 0 1 0-6 0M1621.86 1020.0m-3 0a3 3 0 1 0 6 0a3 3 0 1 0-6 0M1627.02 1020.0m-3 0a3 3 0 1 0 6 0a3 3 0 1 0-6 0M1632.18 1019.0m-3 0a3 3 0 1 0 6 0a3 3 0 1 0-6 0M1637.35 1020.8m-3 0a3 3 0 1 0 6 0a3 3 0 1 0-6 0M1642.51 1020.0m-3 0a3 3 0 1 0 6 0a3 3 0 1 0-6 0M1647.68 1020.0m-3 0a3 3 0 1 0 6 0a3 3 0 1 0-6 0M1652.84 1020.0m-3 0a3 3 0 1 0 6 0a3 3 0 1 0-6 0M1658.00 1017.8m-3 0a3 3 0 1 0 6 0a3 3 0 1 0-6 0M1663.17 1020.0m-3 0a3 3 0 1 0 6 0a3 3 0 1 0-6 0M1668.33 1020.0m-3 0a3 3 0 1 0 6 0a3 3 0 1 0-6 0M1673.49 1017.8m-3 0a3 3 0 1 0 6 0a3 3 0 1 0-6 0M1678.66 1020.0m-3 0a3 3 0 1 0 6 0a3 3 0 1 0-6 0M1683.82 1020.0m-3 0a3 3 0 1 0 6 0a3 3 0 1 0-6 0M1688.99 1017.8m-3 0a3 3 0 1 0 6 0a3 3 0 1 0-6 0M1694.15 1020.0m-3 0a3 3 0 1 0 6 0a3 3 0 1 0-6 0M1699.31 1020.0m-3 0a3 3 0 1 0 6 0a3 3 0 1 0-6 0M1704.48 1020.0m-3 0a3 3 0 1 0 6 0a3 3 0 1 0-6 0M1709.64 1020.8m-3 0a3 3 0 1 0 6 0a3 3 0 1 0-6 0M1714.81 1020.0m-3 0a3 3 0 1 0 6 0a3 3 0 1 0-6 0M1719.97 1018.2m-3 0a3 3 0 1 0 6 0a3 3 0 1 0-6 0M1725.13 1022.2m-3 0a3 3 0 1 0 6 0a3 3 0 1 0-6 0M1730.30 1024.2m-3 0a3 3 0 1 0 6 0a3 3 0 1 0-6 0M1735.46 1022.2m-3 0a3 3 0 1 0 6 0a3 3 0 1 0-6 0M1740.62 1022.2m-3 0a3 3 0 1 0 6 0a3 3 0 1 0-6 0M1745.79 1022.2m-3 0a3 3 0 1 0 6 0a3 3 0 1 0-6 0M1750.95 1022.2m-3 0a3 3 0 1 0 6 0a3 3 0 1 0-6 0M1756.12 1022.2m-3 0a3 3 0 1 0 6 0a3 3 0 1 0-6 0M1761.28 1022.2m-3 0a3 3 0 1 0 6 0a3 3 0 1 0-6 0M1766.44 1022.2m-3 0a3 3 0 1 0 6 0a3 3 0 1 0-6 0M1771.61 1022.2m-3 0a3 3 0 1 0 6 0a3 3 0 1 0-6 0M1776.77 1022.2m-3 0a3 3 0 1 0 6 0a3 3 0 1 0-6 0M1781.93 1022.2m-3 0a3 3 0 1 0 6 0a3 3 0 1 0-6 0M1787.10 1022.2m-3 0a3 3 0 1 0 6 0a3 3 0 1 0-6 0M1792.26 1022.2m-3 0a3 3 0 1 0 6 0a3 3 0 1 0-6 0M1797.43 1022.2m-3 0a3 3 0 1 0 6 0a3 3 0 1 0-6 0M1802.59 1022.2m-3 0a3 3 0 1 0 6 0a3 3 0 1 0-6 0M1807.75 1022.2m-3 0a3 3 0 1 0 6 0a3 3 0 1 0-6 0M1812.92 1022.2m-3 0a3 3 0 1 0 6 0a3 3 0 1 0-6 0" fill="#34a853"/>
<rect x="1029" y="856" width="354" height="29.800" fill="#fff"/>
<path d="M1034.300 871.300H1063.700" stroke="#34a853" stroke-width="2"/><circle cx="1049" cy="871.300" r="3" fill="#34a853"/>
<text x="1069.600" y="875.800" letter-spacing=".45">TW-NTC-TPKD_EM-10</text>
<path d="M1215.500 871.300H1244.800" stroke="#78909c" stroke-width="2"/><circle cx="1230.200" cy="871.300" r="3" fill="#78909c"/>
<text x="1250.400" y="875.800" letter-spacing=".45">TW-NTC-TPKD_EM-1</text>
<text x="1028" y="916.7" text-anchor="end" letter-spacing=".2">1.00</text>
<text x="1028" y="956.3" text-anchor="end" letter-spacing=".2">800m</text>
<text x="1028" y="995.9" text-anchor="end" letter-spacing=".2">600m</text>
<text x="1028" y="1035.5" text-anchor="end" letter-spacing=".2">400m</text>
<text x="1042.5" y="1049.200" text-anchor="middle" letter-spacing=".4">12:00:00AM</text>
<text x="1166.4" y="1049.200" text-anchor="middle" letter-spacing=".4">02:00:00AM</text>
<text x="1290.4" y="1049.200" text-anchor="middle" letter-spacing=".4">04:00:00AM</text>
<text x="1414.3" y="1049.200" text-anchor="middle" letter-spacing=".4">06:00:00AM</text>
<text x="1538.2" y="1049.200" text-anchor="middle" letter-spacing=".4">08:00:00AM</text>
<text x="1662.2" y="1049.200" text-anchor="middle" letter-spacing=".4">10:00:00AM</text>
<text x="1786.1" y="1049.200" text-anchor="middle" letter-spacing=".4">12:00:00PM</text>
<text x="1043" y="1065.200" text-anchor="middle" letter-spacing=".45">16 Jul, 2025</text>
<g fill="#c4c4c4" stroke="none"><path d="M1867.200 839.2l-7 5.800h1.900v5.400h3.700v-3.800h2.800v3.800h3.700v-5.400h1.900l-2.600-2.100v-2.700h-1.600v1.400z"/><path d="M1838 837.5h4v1.300h-2.700v2.700h-1.300zM1851 837.5h-4v1.300h2.700v2.700h1.300zM1838 852.5h4v-1.300h-2.700v-2.700h-1.300zM1851 852.5h-4v-1.300h2.700v-2.700h1.300z"/><path d="M1841.500 842.5h6v5h-6z" fill="none" stroke="#c4c4c4" stroke-width="1.200"/></g>
</svg>
<!--/CHARTS-->
</div>
<!-- POPUP -->
<div id="pop" class="abs">
<!--POP-->
</div>
<div class="abs" style="left:0;top:0;z-index:31">
<svg class="ico" style="left:1469.3px;top:313.2px;width:20px;height:20px;fill:#212121" viewBox="0 0 24 24"><path d="M15.410 7.410L14 6l-6 6 6 6 1.410-1.410L10.830 12z"/></svg>
<div class="abs" style="left:1489.200px;top:315px;font-size:13px;line-height:16px;letter-spacing:.37px;white-space:nowrap;color:#212121">BACK</div>
<div class="abs" style="left:1767.400px;top:315px;font-size:13px;line-height:16px;letter-spacing:.37px;white-space:nowrap;color:#212121">NEXT</div>
<svg class="ico" style="left:1803.3px;top:313.2px;width:20px;height:20px;fill:#212121" viewBox="0 0 24 24"><path d="M10 6L8.590 7.410 13.170 12l-4.580 4.590L10 18l6-6z"/></svg>
<div class="abs" style="left:1464.500px;top:342px;font-size:12px;line-height:16px;letter-spacing:.4px;white-space:nowrap;color:#212121">Only include</div>
<div class="abs" style="left:1464px;top:360px;width:364px;height:68px;border:1px solid #c4c4c4;border-radius:4px;background:#fff"></div>
<div class="chip" style="left:1472px;top:368px;width:163px">TW-NTC-TPKD_EM-1</div><svg class="ico" style="left:1615.0px;top:372.0px;width:16px;height:16px;fill:#a6a6a6" viewBox="0 0 24 24"><path d="M12 2C6.470 2 2 6.470 2 12s4.470 10 10 10 10-4.470 10-10S17.530 2 12 2zm5 13.590L15.590 17 12 13.410 8.410 17 7 15.590 10.590 12 7 8.410 8.410 7 12 10.590 15.590 7 17 8.410 13.410 12 17 15.590z"/></svg>
<div class="chip" style="left:1472px;top:396px;width:170px">TW-NTC-TPKD_EM-10</div><svg class="ico" style="left:1622.0px;top:400.0px;width:16px;height:16px;fill:#a6a6a6" viewBox="0 0 24 24"><path d="M12 2C6.470 2 2 6.470 2 12s4.470 10 10 10 10-4.470 10-10S17.530 2 12 2zm5 13.590L15.590 17 12 13.410 8.410 17 7 15.590 10.590 12 7 8.410 8.410 7 12 10.590 15.590 7 17 8.410 13.410 12 17 15.590z"/></svg>
<div class="abs" style="left:1802px;top:391px;width:0;height:0;border-left:5px solid transparent;border-right:5px solid transparent;border-bottom:5px solid #616161"></div>
<div class="opt" style="left:1464px;top:440px;letter-spacing:.15px">TW-NTC-TPKD_EM-1</div>
<div class="opt" style="left:1464px;top:476px;letter-spacing:.15px">TW-NTC-TPKD_EM-10</div>
<div class="opt" style="left:1464px;top:512px;letter-spacing:.15px">TW-NTC-TPKD_EM-100</div>
<div class="opt" style="left:1464px;top:548px;letter-spacing:.15px">TW-NTC-TPKD_EM-101</div>
<div class="opt" style="left:1464px;top:584px;letter-spacing:.15px">TW-NTC-TPKD_EM-102</div>
<div class="opt" style="left:1464px;top:620px;letter-spacing:.15px">TW-NTC-TPKD_EM-103</div>
<div class="opt" style="left:1464px;top:656px;letter-spacing:.15px">TW-NTC-TPKD_EM-104</div>
<div class="opt" style="left:1464px;top:692px;letter-spacing:.15px">TW-NTC-TPKD_EM-105</div>
<div class="opt" style="left:1464px;top:728px;letter-spacing:.15px;background:#f5f5f5">TW-NTC-TPKD_EM-106</div>
<div class="opt" style="left:1464px;top:764px;letter-spacing:.15px">TW-NTC-TPKD_EM-107</div>
<div class="opt" style="left:1464px;top:800px;letter-spacing:.15px">TW-NTC-TPKD_EM-108</div>
<div class="opt" style="left:1464px;top:836px;letter-spacing:.15px">TW-NTC-TPKD_EM-109</div>
<div class="opt" style="left:1464px;top:872px;letter-spacing:.15px">TW-NTC-TPKD_EM-11</div>
<div class="opt" style="left:1464px;top:908px;letter-spacing:.15px">TW-NTC-TPKD_EM-110</div>
<div class="abs" style="left:1824px;top:444px;width:2px;height:260px;background:#6f7672"></div>
</div>
</body>
</html>
